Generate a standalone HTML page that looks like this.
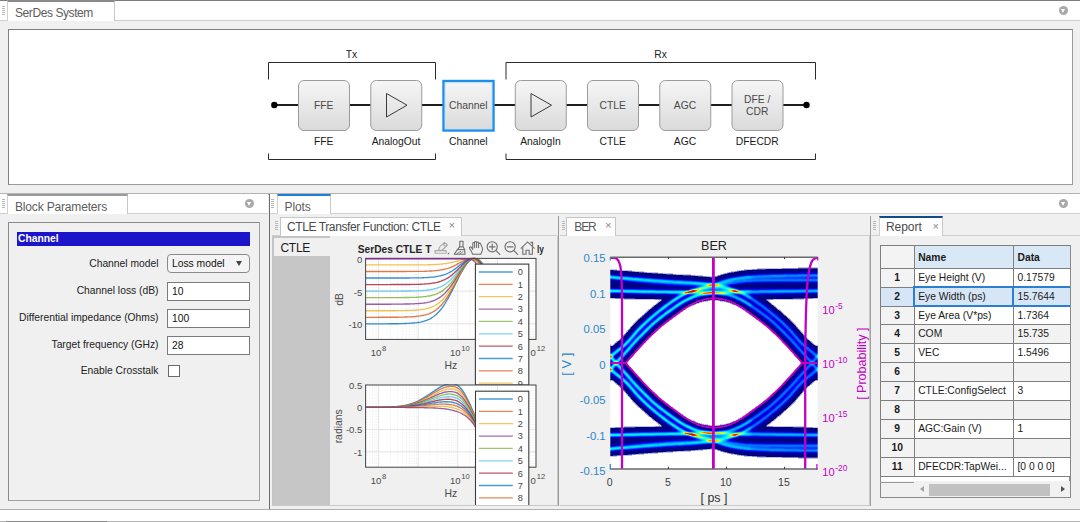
<!DOCTYPE html><html><head><meta charset="utf-8"><title>SerDes Designer</title><style>
*{box-sizing:border-box;margin:0;padding:0}
html,body{width:1080px;height:522px;overflow:hidden;background:#f0f0f0;font-family:"Liberation Sans",sans-serif;}
.abs{position:absolute}
.tabbar{position:absolute;background:#fff;border-bottom:1px solid #cfcfcf}
.tab{position:absolute;background:#fff;border:1px solid #c4c4c4;border-bottom:none;color:#555;font-size:12px;white-space:nowrap}
.ui{font-size:12px;color:#4a4a4a;white-space:nowrap;position:absolute}
.t{position:absolute;white-space:nowrap;font-size:10.3px;color:#222;line-height:12px}
.panel{position:absolute;border:1px solid #8c8c8c;}
.inp{position:absolute;background:#fff;border:1px solid #7a7a7a;font-size:10.3px;color:#111;line-height:16px;padding-left:4px}
.grip{position:absolute;width:3px;height:9px;background:repeating-linear-gradient(to bottom,#b8b8b8 0,#b8b8b8 1px,transparent 1px,transparent 2px)}
.circ{position:absolute;width:9px;height:9px;border-radius:50%;background:#a9a9a9}
.circ:after{content:"";position:absolute;left:2px;top:3px;border-left:2.5px solid transparent;border-right:2.5px solid transparent;border-top:4px solid #fff}
</style></head><body>
<div class="tabbar" style="left:0;top:0;width:1080px;height:21px;border-top:1px solid #7d7d7d"></div>
<div class="abs" style="left:7px;top:0;width:108px;height:21px;background:#fff;border-top:2px solid #8a8a8a;border-left:1px solid #d0d0d0;border-right:1px solid #c8c8c8"></div>
<div class="grip" style="left:2px;top:6px"></div>
<div class="ui" style="left:15px;top:6.3px;letter-spacing:-0.42px;line-height:14px;color:#5c5c5c">SerDes System</div>
<div class="circ" style="left:1059px;top:6px"></div>
<div class="panel" style="left:8px;top:29px;width:1065px;height:156px;background:#fff;border-color:#7f7f7f #9a9a9a #9a9a9a #7f7f7f"></div>
<svg class="abs" style="left:0;top:29px" width="1080" height="156" viewBox="0 29 1080 156" font-family="Liberation Sans, sans-serif"><defs><linearGradient id="bg" x1="0" y1="0" x2="0" y2="1"><stop offset="0" stop-color="#f6f6f6"/><stop offset="1" stop-color="#dadada"/></linearGradient></defs><path d="M268.5 79.5V62.5H435.5V79.5M268.5 153.5V159.5H435.5V153.5" fill="none" stroke="#2a2a2a" stroke-width="1"/><path d="M506 79.5V62.5H815.5V79.5M506 153.5V159.5H815.5V153.5" fill="none" stroke="#2a2a2a" stroke-width="1"/><text x="351.5" y="58" font-size="10.3" text-anchor="middle" fill="#222">Tx</text><text x="660.5" y="58" font-size="10.3" text-anchor="middle" fill="#222">Rx</text><path d="M274 105H807" stroke="#1e1e1e" stroke-width="2"/><circle cx="274.3" cy="105" r="3.2" fill="#000"/><circle cx="806.5" cy="105" r="3.2" fill="#000"/><rect x="298.50" y="80.5" width="51" height="50" rx="5.5" fill="url(#bg)" stroke="#9c9c9c" stroke-width="1"/><text x="323.75" y="109" font-size="10.3" text-anchor="middle" fill="#4a4a4a">FFE</text><text x="323.75" y="145.1" font-size="10.3" text-anchor="middle" fill="#1a1a1a">FFE</text><rect x="370.75" y="80.5" width="51" height="50" rx="5.5" fill="url(#bg)" stroke="#9c9c9c" stroke-width="1"/><path d="M386.50 93.5L407.00 105.2L386.50 117Z" fill="none" stroke="#3a3a3a" stroke-width="1"/><text x="396.00" y="145.1" font-size="10.3" text-anchor="middle" fill="#1a1a1a">AnalogOut</text><rect x="443.50" y="81" width="50" height="49.5" fill="url(#bg)" stroke="#1c8eec" stroke-width="2.4"/><rect x="445.20" y="82.7" width="46.6" height="46.1" fill="none" stroke="#bfe3fa" stroke-width="1" stroke-opacity="0.8"/><text x="468.25" y="109" font-size="10.3" text-anchor="middle" fill="#4a4a4a">Channel</text><text x="468.25" y="145.1" font-size="10.3" text-anchor="middle" fill="#1a1a1a">Channel</text><rect x="515.25" y="80.5" width="51" height="50" rx="5.5" fill="url(#bg)" stroke="#9c9c9c" stroke-width="1"/><path d="M531.00 93.5L551.50 105.2L531.00 117Z" fill="none" stroke="#3a3a3a" stroke-width="1"/><text x="540.50" y="145.1" font-size="10.3" text-anchor="middle" fill="#1a1a1a">AnalogIn</text><rect x="587.50" y="80.5" width="51" height="50" rx="5.5" fill="url(#bg)" stroke="#9c9c9c" stroke-width="1"/><text x="612.75" y="109" font-size="10.3" text-anchor="middle" fill="#4a4a4a">CTLE</text><text x="612.75" y="145.1" font-size="10.3" text-anchor="middle" fill="#1a1a1a">CTLE</text><rect x="659.75" y="80.5" width="51" height="50" rx="5.5" fill="url(#bg)" stroke="#9c9c9c" stroke-width="1"/><text x="685.00" y="109" font-size="10.3" text-anchor="middle" fill="#4a4a4a">AGC</text><text x="685.00" y="145.1" font-size="10.3" text-anchor="middle" fill="#1a1a1a">AGC</text><rect x="732.00" y="80.5" width="51" height="50" rx="5.5" fill="url(#bg)" stroke="#9c9c9c" stroke-width="1"/><text x="757.25" y="102.5" font-size="10.3" text-anchor="middle" fill="#4a4a4a">DFE /</text><text x="757.25" y="115" font-size="10.3" text-anchor="middle" fill="#4a4a4a">CDR</text><text x="757.25" y="145.1" font-size="10.3" text-anchor="middle" fill="#1a1a1a">DFECDR</text></svg>
<div class="abs" style="left:0;top:193.3px;width:1080px;height:1.4px;background:#b4b4b4"></div>
<div class="tabbar" style="left:0;top:194px;width:268px;height:20px"></div>
<div class="abs" style="left:7px;top:194px;width:121px;height:20px;background:#fff;border-top:2px solid #9a9a9a;border-left:1px solid #d0d0d0;border-right:1px solid #c8c8c8"></div>
<div class="grip" style="left:2px;top:199px"></div>
<div class="ui" style="left:15px;top:199.8px;letter-spacing:-0.17px;line-height:14px;color:#5c5c5c">Block Parameters</div>
<div class="circ" style="left:245px;top:199px"></div>
<div class="panel" style="left:8px;top:222px;width:252px;height:279px;border-color:#8a8a8a #a0a0a0 #a0a0a0 #8a8a8a"></div>
<div class="abs" style="left:17px;top:232px;width:233px;height:14px;background:#1c14c8"></div>
<div class="t" style="left:18px;top:233px;color:#fff;font-weight:bold;font-size:10.3px">Channel</div>
<div class="t" style="right:921.5px;top:257.9px">Channel model</div>
<div class="t" style="right:921.5px;top:285.4px">Channel loss (dB)</div>
<div class="t" style="right:921.5px;top:312.4px">Differential impedance (Ohms)</div>
<div class="t" style="right:921.5px;top:339.4px">Target frequency (GHz)</div>
<div class="t" style="right:921.5px;top:364.9px">Enable Crosstalk</div>
<div class="inp" style="left:167px;top:254px;width:83px;height:19px;border-radius:4px;background:#f4f4f4;border-color:#8a8a8a;line-height:17px">Loss model</div>
<div class="abs" style="left:236px;top:261px;border-left:3.5px solid transparent;border-right:3.5px solid transparent;border-top:5px solid #444"></div>
<div class="inp" style="left:167px;top:282px;width:83px;height:19px;line-height:17px">10</div>
<div class="inp" style="left:167px;top:309px;width:83px;height:19px;line-height:17px">100</div>
<div class="inp" style="left:167px;top:336px;width:83px;height:19px;line-height:17px">28</div>
<div class="abs" style="left:167.5px;top:364.7px;width:12px;height:12px;background:#fff;border:1px solid #6a6a6a"></div>
<div class="abs" style="left:269px;top:194px;width:1px;height:316px;background:#6e6e6e"></div>
<div class="abs" style="left:0;top:509px;width:1080px;height:1px;background:#b0b0b0"></div>
<div class="abs" style="left:0;top:510px;width:1080px;height:12px;background:#fff"></div>
<div class="abs" style="left:0;top:521px;width:1080px;height:1px;background:#b8b8b8"></div>
<div class="abs" style="left:6px;top:521px;width:101px;height:1px;background:#8a8a8a"></div>
<div class="tabbar" style="left:270px;top:194px;width:810px;height:20px"></div>
<div class="abs" style="left:277px;top:194px;width:54px;height:20px;background:#fff;border-top:2px solid #1b7fd6;border-left:1px solid #d0d0d0;border-right:1px solid #c8c8c8"></div>
<div class="grip" style="left:271px;top:199px"></div>
<div class="ui" style="left:284.5px;top:199.7px;letter-spacing:-0.1px;line-height:14px;color:#5c5c5c">Plots</div>
<div class="circ" style="left:1059px;top:199px"></div>
<div class="abs" style="left:272px;top:235px;width:285px;height:1px;background:#cfcfcf"></div><div class="grip" style="left:274.5px;top:221px"></div><div class="abs" style="left:279.5px;top:216.5px;width:182.5px;height:19.5px;background:#fff;border:1px solid #c6c6c6;border-bottom:none"></div><div class="ui" style="left:287px;top:220px;line-height:14px;letter-spacing:-0.4px">CTLE Transfer Function: CTLE</div><div class="ui" style="left:448.5px;top:218px;line-height:14px;font-size:11px;color:#888">×</div><div class="abs" style="left:272px;top:236px;width:2px;height:270px;background:#c4c4c4"></div><div class="abs" style="left:272px;top:235.5px;width:58px;height:2px;background:#c4c4c4"></div><div class="abs" style="left:272px;top:505px;width:286px;height:1px;background:#c9c9c9"></div><div class="abs" style="left:274px;top:256px;width:56px;height:249px;background:#c6c6c6"></div><div class="ui" style="left:280.5px;top:240.5px;line-height:14px;color:#1c1c1c;letter-spacing:-0.3px">CTLE</div><svg class="abs" style="left:330px;top:236px" width="228" height="269" viewBox="330 236 228 269" font-family="Liberation Sans, sans-serif"><defs><clipPath id="c1"><rect x="365.6" y="257.4" width="170.39999999999998" height="82.0"/></clipPath><clipPath id="c2"><rect x="365.6" y="384.0" width="170.39999999999998" height="83.19999999999999"/></clipPath></defs><rect x="365.6" y="258.4" width="170.39999999999998" height="81.0" fill="#fff"/><path d="M366.7 258.4V339.4" stroke="#e6e6e6" stroke-width="0.8" stroke-dasharray="1 1.6"/><path d="M369.8 258.4V339.4" stroke="#e6e6e6" stroke-width="0.8" stroke-dasharray="1 1.6"/><path d="M372.5 258.4V339.4" stroke="#e6e6e6" stroke-width="0.8" stroke-dasharray="1 1.6"/><path d="M374.8 258.4V339.4" stroke="#e6e6e6" stroke-width="0.8" stroke-dasharray="1 1.6"/><path d="M376.8 258.4V339.4" stroke="#e6e6e6" stroke-width="0.8" stroke-dasharray="1 1.6"/><path d="M390.5 258.4V339.4" stroke="#e6e6e6" stroke-width="0.8" stroke-dasharray="1 1.6"/><path d="M397.5 258.4V339.4" stroke="#e6e6e6" stroke-width="0.8" stroke-dasharray="1 1.6"/><path d="M402.4 258.4V339.4" stroke="#e6e6e6" stroke-width="0.8" stroke-dasharray="1 1.6"/><path d="M406.3 258.4V339.4" stroke="#e6e6e6" stroke-width="0.8" stroke-dasharray="1 1.6"/><path d="M409.4 258.4V339.4" stroke="#e6e6e6" stroke-width="0.8" stroke-dasharray="1 1.6"/><path d="M412.1 258.4V339.4" stroke="#e6e6e6" stroke-width="0.8" stroke-dasharray="1 1.6"/><path d="M414.4 258.4V339.4" stroke="#e6e6e6" stroke-width="0.8" stroke-dasharray="1 1.6"/><path d="M416.4 258.4V339.4" stroke="#e6e6e6" stroke-width="0.8" stroke-dasharray="1 1.6"/><path d="M430.1 258.4V339.4" stroke="#e6e6e6" stroke-width="0.8" stroke-dasharray="1 1.6"/><path d="M437.1 258.4V339.4" stroke="#e6e6e6" stroke-width="0.8" stroke-dasharray="1 1.6"/><path d="M442.0 258.4V339.4" stroke="#e6e6e6" stroke-width="0.8" stroke-dasharray="1 1.6"/><path d="M445.9 258.4V339.4" stroke="#e6e6e6" stroke-width="0.8" stroke-dasharray="1 1.6"/><path d="M449.0 258.4V339.4" stroke="#e6e6e6" stroke-width="0.8" stroke-dasharray="1 1.6"/><path d="M451.7 258.4V339.4" stroke="#e6e6e6" stroke-width="0.8" stroke-dasharray="1 1.6"/><path d="M454.0 258.4V339.4" stroke="#e6e6e6" stroke-width="0.8" stroke-dasharray="1 1.6"/><path d="M456.0 258.4V339.4" stroke="#e6e6e6" stroke-width="0.8" stroke-dasharray="1 1.6"/><path d="M469.7 258.4V339.4" stroke="#e6e6e6" stroke-width="0.8" stroke-dasharray="1 1.6"/><path d="M476.7 258.4V339.4" stroke="#e6e6e6" stroke-width="0.8" stroke-dasharray="1 1.6"/><path d="M481.6 258.4V339.4" stroke="#e6e6e6" stroke-width="0.8" stroke-dasharray="1 1.6"/><path d="M485.5 258.4V339.4" stroke="#e6e6e6" stroke-width="0.8" stroke-dasharray="1 1.6"/><path d="M488.6 258.4V339.4" stroke="#e6e6e6" stroke-width="0.8" stroke-dasharray="1 1.6"/><path d="M491.3 258.4V339.4" stroke="#e6e6e6" stroke-width="0.8" stroke-dasharray="1 1.6"/><path d="M493.6 258.4V339.4" stroke="#e6e6e6" stroke-width="0.8" stroke-dasharray="1 1.6"/><path d="M495.6 258.4V339.4" stroke="#e6e6e6" stroke-width="0.8" stroke-dasharray="1 1.6"/><path d="M509.3 258.4V339.4" stroke="#e6e6e6" stroke-width="0.8" stroke-dasharray="1 1.6"/><path d="M516.3 258.4V339.4" stroke="#e6e6e6" stroke-width="0.8" stroke-dasharray="1 1.6"/><path d="M521.2 258.4V339.4" stroke="#e6e6e6" stroke-width="0.8" stroke-dasharray="1 1.6"/><path d="M525.1 258.4V339.4" stroke="#e6e6e6" stroke-width="0.8" stroke-dasharray="1 1.6"/><path d="M528.2 258.4V339.4" stroke="#e6e6e6" stroke-width="0.8" stroke-dasharray="1 1.6"/><path d="M530.9 258.4V339.4" stroke="#e6e6e6" stroke-width="0.8" stroke-dasharray="1 1.6"/><path d="M533.2 258.4V339.4" stroke="#e6e6e6" stroke-width="0.8" stroke-dasharray="1 1.6"/><path d="M535.2 258.4V339.4" stroke="#e6e6e6" stroke-width="0.8" stroke-dasharray="1 1.6"/><path d="M378.6 258.4V339.4" stroke="#e4e4e4" stroke-width="1"/><path d="M418.2 258.4V339.4" stroke="#e4e4e4" stroke-width="1"/><path d="M457.8 258.4V339.4" stroke="#e4e4e4" stroke-width="1"/><path d="M497.4 258.4V339.4" stroke="#e4e4e4" stroke-width="1"/><path d="M365.6 291.1H536.0" stroke="#e2e2e2" stroke-width="1"/><path d="M365.6 323.8H536.0" stroke="#e2e2e2" stroke-width="1"/><g clip-path="url(#c1)" fill="none" stroke-width="1.35" stroke-opacity="0.78" stroke-linejoin="round"><path d="M365.6 323.8L366.8 323.8L368.0 323.8L369.3 323.8L370.5 323.8L371.7 323.8L372.9 323.8L374.1 323.8L375.3 323.8L376.6 323.8L377.8 323.8L379.0 323.8L380.2 323.8L381.4 323.8L382.6 323.8L383.9 323.8L385.1 323.8L386.3 323.8L387.5 323.8L388.7 323.8L389.9 323.7L391.2 323.7L392.4 323.7L393.6 323.7L394.8 323.7L396.0 323.7L397.2 323.7L398.5 323.7L399.7 323.6L400.9 323.6L402.1 323.6L403.3 323.6L404.5 323.5L405.8 323.5L407.0 323.4L408.2 323.4L409.4 323.3L410.6 323.2L411.9 323.1L413.1 323.0L414.3 322.9L415.5 322.8L416.7 322.7L417.9 322.5L419.2 322.3L420.4 322.1L421.6 321.8L422.8 321.5L424.0 321.2L425.2 320.8L426.5 320.4L427.7 319.9L428.9 319.4L430.1 318.8L431.3 318.1L432.5 317.3L433.8 316.5L435.0 315.5L436.2 314.5L437.4 313.3L438.6 312.1L439.8 310.7L441.1 309.2L442.3 307.6L443.5 305.9L444.7 304.0L445.9 302.0L447.1 300.0L448.4 297.8L449.6 295.6L450.8 293.3L452.0 290.9L453.2 288.5L454.5 286.0L455.7 283.5L456.9 281.1L458.1 278.6L459.3 276.3L460.5 273.9L461.8 271.7L463.0 269.6L464.2 267.6L465.4 265.7L466.6 264.0L467.8 262.5L469.1 261.2L470.3 260.2L471.5 259.3L472.7 258.8L473.9 258.5L475.1 258.4L476.4 258.6L477.6 259.1L478.8 259.9L480.0 260.9L481.2 262.2L482.4 263.7L483.7 265.5L484.9 267.5L486.1 269.7L487.3 272.0L488.5 274.6L489.7 277.3L491.0 280.2L492.2 283.1L493.4 286.3L494.6 289.5L495.8 292.8L497.1 296.2L498.3 299.7L499.5 303.2L500.7 306.8L501.9 310.5L503.1 314.2L504.4 317.9L505.6 321.7L506.8 325.5L508.0 329.4L509.2 333.2L510.4 337.1L511.7 341.0L512.9 344.9L514.1 348.8L515.3 352.8L516.5 356.7L517.7 360.7L519.0 364.7L520.2 368.6L521.4 372.6L522.6 376.6L523.8 380.6L525.0 384.6L526.3 388.6L527.5 392.6L528.7 396.6L529.9 400.6L531.1 404.6L532.3 408.6L533.6 412.6L534.8 416.6L536.0 420.6" stroke="#0072BD"/><path d="M365.6 317.3L366.8 317.3L368.0 317.3L369.3 317.3L370.5 317.3L371.7 317.3L372.9 317.3L374.1 317.3L375.3 317.3L376.6 317.3L377.8 317.3L379.0 317.2L380.2 317.2L381.4 317.2L382.6 317.2L383.9 317.2L385.1 317.2L386.3 317.2L387.5 317.2L388.7 317.2L389.9 317.2L391.2 317.2L392.4 317.2L393.6 317.2L394.8 317.2L396.0 317.2L397.2 317.2L398.5 317.2L399.7 317.1L400.9 317.1L402.1 317.1L403.3 317.1L404.5 317.0L405.8 317.0L407.0 317.0L408.2 316.9L409.4 316.9L410.6 316.8L411.9 316.7L413.1 316.7L414.3 316.6L415.5 316.5L416.7 316.4L417.9 316.2L419.2 316.1L420.4 315.9L421.6 315.7L422.8 315.5L424.0 315.2L425.2 314.9L426.5 314.6L427.7 314.2L428.9 313.8L430.1 313.3L431.3 312.7L432.5 312.1L433.8 311.4L435.0 310.6L436.2 309.8L437.4 308.8L438.6 307.8L439.8 306.6L441.1 305.3L442.3 303.9L443.5 302.4L444.7 300.8L445.9 299.1L447.1 297.3L448.4 295.4L449.6 293.3L450.8 291.2L452.0 289.1L453.2 286.8L454.5 284.6L455.7 282.3L456.9 280.0L458.1 277.7L459.3 275.4L460.5 273.2L461.8 271.1L463.0 269.0L464.2 267.1L465.4 265.3L466.6 263.7L467.8 262.3L469.1 261.1L470.3 260.0L471.5 259.3L472.7 258.7L473.9 258.4L475.1 258.4L476.4 258.7L477.6 259.2L478.8 260.0L480.0 261.0L481.2 262.3L482.4 263.8L483.7 265.6L484.9 267.6L486.1 269.8L487.3 272.2L488.5 274.7L489.7 277.5L491.0 280.3L492.2 283.3L493.4 286.4L494.6 289.7L495.8 293.0L497.1 296.4L498.3 299.9L499.5 303.4L500.7 307.0L501.9 310.7L503.1 314.4L504.4 318.1L505.6 321.9L506.8 325.7L508.0 329.5L509.2 333.4L510.4 337.3L511.7 341.2L512.9 345.1L514.1 349.0L515.3 353.0L516.5 356.9L517.7 360.9L519.0 364.9L520.2 368.8L521.4 372.8L522.6 376.8L523.8 380.8L525.0 384.8L526.3 388.8L527.5 392.8L528.7 396.8L529.9 400.8L531.1 404.8L532.3 408.8L533.6 412.8L534.8 416.8L536.0 420.8" stroke="#D95319"/><path d="M365.6 310.7L366.8 310.7L368.0 310.7L369.3 310.7L370.5 310.7L371.7 310.7L372.9 310.7L374.1 310.7L375.3 310.7L376.6 310.7L377.8 310.7L379.0 310.7L380.2 310.7L381.4 310.7L382.6 310.7L383.9 310.7L385.1 310.7L386.3 310.7L387.5 310.7L388.7 310.7L389.9 310.7L391.2 310.7L392.4 310.7L393.6 310.7L394.8 310.7L396.0 310.7L397.2 310.6L398.5 310.6L399.7 310.6L400.9 310.6L402.1 310.6L403.3 310.6L404.5 310.6L405.8 310.5L407.0 310.5L408.2 310.5L409.4 310.4L410.6 310.4L411.9 310.3L413.1 310.3L414.3 310.2L415.5 310.1L416.7 310.0L417.9 309.9L419.2 309.8L420.4 309.7L421.6 309.5L422.8 309.3L424.0 309.1L425.2 308.9L426.5 308.6L427.7 308.3L428.9 308.0L430.1 307.6L431.3 307.2L432.5 306.7L433.8 306.1L435.0 305.5L436.2 304.8L437.4 304.0L438.6 303.1L439.8 302.2L441.1 301.1L442.3 299.9L443.5 298.7L444.7 297.3L445.9 295.8L447.1 294.2L448.4 292.5L449.6 290.8L450.8 288.9L452.0 286.9L453.2 284.9L454.5 282.8L455.7 280.7L456.9 278.6L458.1 276.5L459.3 274.4L460.5 272.3L461.8 270.3L463.0 268.4L464.2 266.6L465.4 264.9L466.6 263.4L467.8 262.0L469.1 260.8L470.3 259.9L471.5 259.2L472.7 258.7L473.9 258.4L475.1 258.4L476.4 258.7L477.6 259.3L478.8 260.1L480.0 261.1L481.2 262.4L482.4 264.0L483.7 265.8L484.9 267.8L486.1 270.0L487.3 272.4L488.5 274.9L489.7 277.7L491.0 280.5L492.2 283.5L493.4 286.7L494.6 289.9L495.8 293.2L497.1 296.6L498.3 300.1L499.5 303.7L500.7 307.3L501.9 310.9L503.1 314.6L504.4 318.4L505.6 322.2L506.8 326.0L508.0 329.8L509.2 333.7L510.4 337.5L511.7 341.4L512.9 345.4L514.1 349.3L515.3 353.2L516.5 357.2L517.7 361.1L519.0 365.1L520.2 369.1L521.4 373.1L522.6 377.1L523.8 381.0L525.0 385.0L526.3 389.0L527.5 393.0L528.7 397.0L529.9 401.1L531.1 405.1L532.3 409.1L533.6 413.1L534.8 417.1L536.0 421.1" stroke="#EDB120"/><path d="M365.6 304.2L366.8 304.2L368.0 304.2L369.3 304.2L370.5 304.2L371.7 304.2L372.9 304.2L374.1 304.2L375.3 304.2L376.6 304.2L377.8 304.2L379.0 304.2L380.2 304.2L381.4 304.2L382.6 304.2L383.9 304.2L385.1 304.2L386.3 304.2L387.5 304.2L388.7 304.2L389.9 304.2L391.2 304.2L392.4 304.1L393.6 304.1L394.8 304.1L396.0 304.1L397.2 304.1L398.5 304.1L399.7 304.1L400.9 304.1L402.1 304.1L403.3 304.1L404.5 304.0L405.8 304.0L407.0 304.0L408.2 304.0L409.4 304.0L410.6 303.9L411.9 303.9L413.1 303.8L414.3 303.8L415.5 303.7L416.7 303.6L417.9 303.6L419.2 303.5L420.4 303.4L421.6 303.3L422.8 303.1L424.0 303.0L425.2 302.8L426.5 302.6L427.7 302.3L428.9 302.1L430.1 301.8L431.3 301.4L432.5 301.0L433.8 300.6L435.0 300.1L436.2 299.5L437.4 298.9L438.6 298.2L439.8 297.4L441.1 296.5L442.3 295.6L443.5 294.5L444.7 293.4L445.9 292.1L447.1 290.8L448.4 289.3L449.6 287.8L450.8 286.2L452.0 284.5L453.2 282.7L454.5 280.8L455.7 278.9L456.9 277.0L458.1 275.1L459.3 273.2L460.5 271.2L461.8 269.4L463.0 267.6L464.2 265.9L465.4 264.4L466.6 262.9L467.8 261.7L469.1 260.6L470.3 259.7L471.5 259.0L472.7 258.6L473.9 258.4L475.1 258.5L476.4 258.8L477.6 259.4L478.8 260.2L480.0 261.3L481.2 262.6L482.4 264.2L483.7 266.0L484.9 268.0L486.1 270.2L487.3 272.6L488.5 275.2L489.7 278.0L491.0 280.8L492.2 283.8L493.4 287.0L494.6 290.2L495.8 293.5L497.1 296.9L498.3 300.4L499.5 304.0L500.7 307.6L501.9 311.2L503.1 315.0L504.4 318.7L505.6 322.5L506.8 326.3L508.0 330.1L509.2 334.0L510.4 337.9L511.7 341.8L512.9 345.7L514.1 349.6L515.3 353.6L516.5 357.5L517.7 361.5L519.0 365.5L520.2 369.4L521.4 373.4L522.6 377.4L523.8 381.4L525.0 385.4L526.3 389.4L527.5 393.4L528.7 397.4L529.9 401.4L531.1 405.4L532.3 409.4L533.6 413.4L534.8 417.4L536.0 421.4" stroke="#7E2F8E"/><path d="M365.6 297.6L366.8 297.6L368.0 297.6L369.3 297.6L370.5 297.6L371.7 297.6L372.9 297.6L374.1 297.6L375.3 297.6L376.6 297.6L377.8 297.6L379.0 297.6L380.2 297.6L381.4 297.6L382.6 297.6L383.9 297.6L385.1 297.6L386.3 297.6L387.5 297.6L388.7 297.6L389.9 297.6L391.2 297.6L392.4 297.6L393.6 297.6L394.8 297.6L396.0 297.6L397.2 297.6L398.5 297.6L399.7 297.6L400.9 297.6L402.1 297.6L403.3 297.6L404.5 297.5L405.8 297.5L407.0 297.5L408.2 297.5L409.4 297.5L410.6 297.4L411.9 297.4L413.1 297.4L414.3 297.3L415.5 297.3L416.7 297.2L417.9 297.2L419.2 297.1L420.4 297.0L421.6 296.9L422.8 296.8L424.0 296.7L425.2 296.6L426.5 296.4L427.7 296.2L428.9 296.0L430.1 295.8L431.3 295.5L432.5 295.2L433.8 294.9L435.0 294.5L436.2 294.0L437.4 293.6L438.6 293.0L439.8 292.4L441.1 291.7L442.3 290.9L443.5 290.1L444.7 289.1L445.9 288.1L447.1 287.0L448.4 285.8L449.6 284.5L450.8 283.1L452.0 281.6L453.2 280.1L454.5 278.5L455.7 276.8L456.9 275.1L458.1 273.4L459.3 271.7L460.5 270.0L461.8 268.3L463.0 266.7L464.2 265.1L465.4 263.7L466.6 262.4L467.8 261.2L469.1 260.3L470.3 259.5L471.5 258.9L472.7 258.5L473.9 258.4L475.1 258.5L476.4 258.9L477.6 259.5L478.8 260.4L480.0 261.5L481.2 262.9L482.4 264.5L483.7 266.3L484.9 268.3L486.1 270.6L487.3 273.0L488.5 275.6L489.7 278.3L491.0 281.2L492.2 284.2L493.4 287.4L494.6 290.6L495.8 293.9L497.1 297.3L498.3 300.8L499.5 304.4L500.7 308.0L501.9 311.7L503.1 315.4L504.4 319.1L505.6 322.9L506.8 326.7L508.0 330.6L509.2 334.4L510.4 338.3L511.7 342.2L512.9 346.1L514.1 350.1L515.3 354.0L516.5 358.0L517.7 361.9L519.0 365.9L520.2 369.9L521.4 373.8L522.6 377.8L523.8 381.8L525.0 385.8L526.3 389.8L527.5 393.8L528.7 397.8L529.9 401.8L531.1 405.8L532.3 409.8L533.6 413.9L534.8 417.9L536.0 421.9" stroke="#77AC30"/><path d="M365.6 291.1L366.8 291.1L368.0 291.1L369.3 291.1L370.5 291.1L371.7 291.1L372.9 291.1L374.1 291.1L375.3 291.1L376.6 291.1L377.8 291.1L379.0 291.1L380.2 291.1L381.4 291.1L382.6 291.1L383.9 291.1L385.1 291.1L386.3 291.1L387.5 291.1L388.7 291.1L389.9 291.1L391.2 291.1L392.4 291.1L393.6 291.1L394.8 291.1L396.0 291.1L397.2 291.1L398.5 291.1L399.7 291.1L400.9 291.1L402.1 291.0L403.3 291.0L404.5 291.0L405.8 291.0L407.0 291.0L408.2 291.0L409.4 291.0L410.6 291.0L411.9 290.9L413.1 290.9L414.3 290.9L415.5 290.8L416.7 290.8L417.9 290.8L419.2 290.7L420.4 290.6L421.6 290.6L422.8 290.5L424.0 290.4L425.2 290.3L426.5 290.2L427.7 290.0L428.9 289.9L430.1 289.7L431.3 289.5L432.5 289.3L433.8 289.0L435.0 288.7L436.2 288.4L437.4 288.0L438.6 287.6L439.8 287.1L441.1 286.6L442.3 286.0L443.5 285.3L444.7 284.5L445.9 283.7L447.1 282.8L448.4 281.8L449.6 280.8L450.8 279.7L452.0 278.4L453.2 277.1L454.5 275.8L455.7 274.4L456.9 272.9L458.1 271.4L459.3 269.9L460.5 268.4L461.8 267.0L463.0 265.6L464.2 264.2L465.4 262.9L466.6 261.8L467.8 260.8L469.1 259.9L470.3 259.2L471.5 258.7L472.7 258.5L473.9 258.4L475.1 258.6L476.4 259.0L477.6 259.7L478.8 260.6L480.0 261.8L481.2 263.2L482.4 264.8L483.7 266.7L484.9 268.7L486.1 271.0L487.3 273.4L488.5 276.0L489.7 278.8L491.0 281.7L492.2 284.7L493.4 287.9L494.6 291.1L495.8 294.5L497.1 297.9L498.3 301.4L499.5 304.9L500.7 308.6L501.9 312.2L503.1 315.9L504.4 319.7L505.6 323.5L506.8 327.3L508.0 331.1L509.2 335.0L510.4 338.9L511.7 342.8L512.9 346.7L514.1 350.7L515.3 354.6L516.5 358.5L517.7 362.5L519.0 366.5L520.2 370.5L521.4 374.4L522.6 378.4L523.8 382.4L525.0 386.4L526.3 390.4L527.5 394.4L528.7 398.4L529.9 402.4L531.1 406.4L532.3 410.4L533.6 414.4L534.8 418.5L536.0 422.5" stroke="#4DBEEE"/><path d="M365.6 284.6L366.8 284.6L368.0 284.6L369.3 284.6L370.5 284.6L371.7 284.6L372.9 284.6L374.1 284.6L375.3 284.6L376.6 284.6L377.8 284.6L379.0 284.6L380.2 284.6L381.4 284.6L382.6 284.6L383.9 284.6L385.1 284.6L386.3 284.6L387.5 284.6L388.7 284.6L389.9 284.6L391.2 284.5L392.4 284.5L393.6 284.5L394.8 284.5L396.0 284.5L397.2 284.5L398.5 284.5L399.7 284.5L400.9 284.5L402.1 284.5L403.3 284.5L404.5 284.5L405.8 284.5L407.0 284.5L408.2 284.5L409.4 284.5L410.6 284.5L411.9 284.4L413.1 284.4L414.3 284.4L415.5 284.4L416.7 284.3L417.9 284.3L419.2 284.3L420.4 284.2L421.6 284.2L422.8 284.1L424.0 284.1L425.2 284.0L426.5 283.9L427.7 283.8L428.9 283.7L430.1 283.6L431.3 283.4L432.5 283.2L433.8 283.0L435.0 282.8L436.2 282.6L437.4 282.3L438.6 282.0L439.8 281.6L441.1 281.2L442.3 280.7L443.5 280.2L444.7 279.7L445.9 279.0L447.1 278.3L448.4 277.6L449.6 276.8L450.8 275.9L452.0 274.9L453.2 273.8L454.5 272.8L455.7 271.6L456.9 270.4L458.1 269.2L459.3 267.9L460.5 266.7L461.8 265.4L463.0 264.2L464.2 263.1L465.4 262.0L466.6 261.0L467.8 260.2L469.1 259.5L470.3 258.9L471.5 258.6L472.7 258.4L473.9 258.5L475.1 258.7L476.4 259.3L477.6 260.0L478.8 261.0L480.0 262.2L481.2 263.7L482.4 265.3L483.7 267.2L484.9 269.3L486.1 271.6L487.3 274.1L488.5 276.7L489.7 279.5L491.0 282.4L492.2 285.4L493.4 288.6L494.6 291.9L495.8 295.2L497.1 298.6L498.3 302.1L499.5 305.7L500.7 309.3L501.9 313.0L503.1 316.7L504.4 320.5L505.6 324.3L506.8 328.1L508.0 331.9L509.2 335.8L510.4 339.7L511.7 343.6L512.9 347.5L514.1 351.4L515.3 355.4L516.5 359.3L517.7 363.3L519.0 367.3L520.2 371.3L521.4 375.2L522.6 379.2L523.8 383.2L525.0 387.2L526.3 391.2L527.5 395.2L528.7 399.2L529.9 403.2L531.1 407.2L532.3 411.2L533.6 415.3L534.8 419.3L536.0 423.3" stroke="#A2142F"/><path d="M365.6 278.0L366.8 278.0L368.0 278.0L369.3 278.0L370.5 278.0L371.7 278.0L372.9 278.0L374.1 278.0L375.3 278.0L376.6 278.0L377.8 278.0L379.0 278.0L380.2 278.0L381.4 278.0L382.6 278.0L383.9 278.0L385.1 278.0L386.3 278.0L387.5 278.0L388.7 278.0L389.9 278.0L391.2 278.0L392.4 278.0L393.6 278.0L394.8 278.0L396.0 278.0L397.2 278.0L398.5 278.0L399.7 278.0L400.9 278.0L402.1 278.0L403.3 278.0L404.5 278.0L405.8 278.0L407.0 278.0L408.2 278.0L409.4 278.0L410.6 277.9L411.9 277.9L413.1 277.9L414.3 277.9L415.5 277.9L416.7 277.9L417.9 277.8L419.2 277.8L420.4 277.8L421.6 277.8L422.8 277.7L424.0 277.7L425.2 277.6L426.5 277.6L427.7 277.5L428.9 277.4L430.1 277.3L431.3 277.2L432.5 277.1L433.8 277.0L435.0 276.8L436.2 276.6L437.4 276.4L438.6 276.2L439.8 275.9L441.1 275.6L442.3 275.3L443.5 275.0L444.7 274.5L445.9 274.1L447.1 273.6L448.4 273.0L449.6 272.4L450.8 271.7L452.0 271.0L453.2 270.2L454.5 269.4L455.7 268.5L456.9 267.6L458.1 266.6L459.3 265.6L460.5 264.6L461.8 263.6L463.0 262.7L464.2 261.8L465.4 260.9L466.6 260.2L467.8 259.5L469.1 259.0L470.3 258.6L471.5 258.4L472.7 258.4L473.9 258.6L475.1 259.0L476.4 259.6L477.6 260.5L478.8 261.5L480.0 262.8L481.2 264.3L482.4 266.1L483.7 268.0L484.9 270.2L486.1 272.5L487.3 275.0L488.5 277.6L489.7 280.4L491.0 283.4L492.2 286.4L493.4 289.6L494.6 292.9L495.8 296.3L497.1 299.7L498.3 303.2L499.5 306.8L500.7 310.4L501.9 314.1L503.1 317.8L504.4 321.6L505.6 325.4L506.8 329.2L508.0 333.0L509.2 336.9L510.4 340.8L511.7 344.7L512.9 348.6L514.1 352.6L515.3 356.5L516.5 360.5L517.7 364.4L519.0 368.4L520.2 372.4L521.4 376.4L522.6 380.4L523.8 384.4L525.0 388.3L526.3 392.3L527.5 396.3L528.7 400.4L529.9 404.4L531.1 408.4L532.3 412.4L533.6 416.4L534.8 420.4L536.0 424.4" stroke="#0072BD"/><path d="M365.6 271.5L366.8 271.5L368.0 271.5L369.3 271.5L370.5 271.5L371.7 271.5L372.9 271.5L374.1 271.5L375.3 271.5L376.6 271.5L377.8 271.5L379.0 271.5L380.2 271.5L381.4 271.5L382.6 271.5L383.9 271.5L385.1 271.5L386.3 271.5L387.5 271.5L388.7 271.5L389.9 271.5L391.2 271.5L392.4 271.5L393.6 271.5L394.8 271.5L396.0 271.5L397.2 271.5L398.5 271.5L399.7 271.5L400.9 271.5L402.1 271.5L403.3 271.5L404.5 271.5L405.8 271.5L407.0 271.4L408.2 271.4L409.4 271.4L410.6 271.4L411.9 271.4L413.1 271.4L414.3 271.4L415.5 271.4L416.7 271.4L417.9 271.4L419.2 271.4L420.4 271.3L421.6 271.3L422.8 271.3L424.0 271.3L425.2 271.2L426.5 271.2L427.7 271.1L428.9 271.1L430.1 271.0L431.3 271.0L432.5 270.9L433.8 270.8L435.0 270.7L436.2 270.6L437.4 270.4L438.6 270.3L439.8 270.1L441.1 269.9L442.3 269.7L443.5 269.5L444.7 269.2L445.9 268.9L447.1 268.6L448.4 268.2L449.6 267.8L450.8 267.3L452.0 266.8L453.2 266.3L454.5 265.7L455.7 265.1L456.9 264.4L458.1 263.7L459.3 263.0L460.5 262.3L461.8 261.7L463.0 261.0L464.2 260.4L465.4 259.8L466.6 259.3L467.8 258.9L469.1 258.6L470.3 258.4L471.5 258.4L472.7 258.6L473.9 258.9L475.1 259.5L476.4 260.2L477.6 261.2L478.8 262.4L480.0 263.8L481.2 265.4L482.4 267.2L483.7 269.2L484.9 271.4L486.1 273.8L487.3 276.3L488.5 279.0L489.7 281.9L491.0 284.9L492.2 288.0L493.4 291.1L494.6 294.4L495.8 297.8L497.1 301.3L498.3 304.8L499.5 308.4L500.7 312.0L501.9 315.7L503.1 319.5L504.4 323.2L505.6 327.0L506.8 330.9L508.0 334.7L509.2 338.6L510.4 342.5L511.7 346.4L512.9 350.3L514.1 354.3L515.3 358.2L516.5 362.2L517.7 366.1L519.0 370.1L520.2 374.1L521.4 378.1L522.6 382.0L523.8 386.0L525.0 390.0L526.3 394.0L527.5 398.0L528.7 402.0L529.9 406.0L531.1 410.1L532.3 414.1L533.6 418.1L534.8 422.1L536.0 426.1" stroke="#D95319"/><path d="M365.6 264.9L366.8 264.9L368.0 264.9L369.3 264.9L370.5 264.9L371.7 264.9L372.9 264.9L374.1 264.9L375.3 264.9L376.6 264.9L377.8 264.9L379.0 264.9L380.2 264.9L381.4 264.9L382.6 264.9L383.9 264.9L385.1 264.9L386.3 264.9L387.5 264.9L388.7 264.9L389.9 264.9L391.2 264.9L392.4 264.9L393.6 264.9L394.8 264.9L396.0 264.9L397.2 264.9L398.5 264.9L399.7 264.9L400.9 264.9L402.1 264.9L403.3 264.9L404.5 264.9L405.8 264.9L407.0 264.9L408.2 264.9L409.4 264.9L410.6 264.9L411.9 264.9L413.1 264.9L414.3 264.9L415.5 264.9L416.7 264.9L417.9 264.9L419.2 264.9L420.4 264.9L421.6 264.8L422.8 264.8L424.0 264.8L425.2 264.8L426.5 264.8L427.7 264.8L428.9 264.7L430.1 264.7L431.3 264.7L432.5 264.6L433.8 264.6L435.0 264.5L436.2 264.5L437.4 264.4L438.6 264.3L439.8 264.2L441.1 264.1L442.3 264.0L443.5 263.9L444.7 263.7L445.9 263.5L447.1 263.3L448.4 263.1L449.6 262.9L450.8 262.7L452.0 262.4L453.2 262.1L454.5 261.8L455.7 261.4L456.9 261.1L458.1 260.7L459.3 260.3L460.5 259.9L461.8 259.6L463.0 259.2L464.2 258.9L465.4 258.7L466.6 258.5L467.8 258.4L469.1 258.4L470.3 258.5L471.5 258.8L472.7 259.2L473.9 259.8L475.1 260.6L476.4 261.5L477.6 262.7L478.8 264.0L480.0 265.5L481.2 267.3L482.4 269.2L483.7 271.3L484.9 273.6L486.1 276.1L487.3 278.7L488.5 281.5L489.7 284.4L491.0 287.4L492.2 290.5L493.4 293.8L494.6 297.1L495.8 300.5L497.1 304.0L498.3 307.5L499.5 311.1L500.7 314.8L501.9 318.5L503.1 322.2L504.4 326.0L505.6 329.8L506.8 333.7L508.0 337.5L509.2 341.4L510.4 345.3L511.7 349.2L512.9 353.1L514.1 357.1L515.3 361.0L516.5 365.0L517.7 369.0L519.0 372.9L520.2 376.9L521.4 380.9L522.6 384.9L523.8 388.9L525.0 392.9L526.3 396.9L527.5 400.9L528.7 404.9L529.9 408.9L531.1 412.9L532.3 416.9L533.6 420.9L534.8 424.9L536.0 429.0" stroke="#EDB120"/><path d="M365.6 258.4L366.8 258.4L368.0 258.4L369.3 258.4L370.5 258.4L371.7 258.4L372.9 258.4L374.1 258.4L375.3 258.4L376.6 258.4L377.8 258.4L379.0 258.4L380.2 258.4L381.4 258.4L382.6 258.4L383.9 258.4L385.1 258.4L386.3 258.4L387.5 258.4L388.7 258.4L389.9 258.4L391.2 258.4L392.4 258.4L393.6 258.4L394.8 258.4L396.0 258.4L397.2 258.4L398.5 258.4L399.7 258.4L400.9 258.4L402.1 258.4L403.3 258.4L404.5 258.4L405.8 258.4L407.0 258.4L408.2 258.4L409.4 258.4L410.6 258.4L411.9 258.4L413.1 258.4L414.3 258.4L415.5 258.4L416.7 258.4L417.9 258.4L419.2 258.4L420.4 258.4L421.6 258.4L422.8 258.4L424.0 258.4L425.2 258.4L426.5 258.4L427.7 258.4L428.9 258.4L430.1 258.4L431.3 258.4L432.5 258.4L433.8 258.4L435.0 258.4L436.2 258.4L437.4 258.4L438.6 258.4L439.8 258.4L441.1 258.4L442.3 258.4L443.5 258.4L444.7 258.4L445.9 258.4L447.1 258.4L448.4 258.4L449.6 258.4L450.8 258.4L452.0 258.4L453.2 258.4L454.5 258.4L455.7 258.4L456.9 258.4L458.1 258.4L459.3 258.4L460.5 258.4L461.8 258.4L463.0 258.5L464.2 258.5L465.4 258.5L466.6 258.6L467.8 258.7L469.1 258.9L470.3 259.1L471.5 259.5L472.7 260.1L473.9 260.9L475.1 262.1L476.4 263.9L477.6 266.5L478.8 270.0L480.0 274.6L481.2 280.5L482.4 287.7L483.7 296.0L484.9 305.3L486.1 315.4L487.3 326.1L488.5 337.2L489.7 348.7L491.0 360.3L492.2 372.1L493.4 384.0L494.6 395.9L495.8 407.9L497.1 419.9L498.3 432.0L499.5 444.0L500.7 456.0L501.9 468.1L503.1 480.2L504.4 492.2L505.6 504.3L506.8 516.3L508.0 528.4L509.2 540.4L510.4 552.5L511.7 564.6L512.9 576.6L514.1 588.7L515.3 600.8L516.5 612.8L517.7 624.9L519.0 636.9L520.2 649.0L521.4 661.1L522.6 673.1L523.8 685.2L525.0 697.2L526.3 709.3L527.5 721.4L528.7 733.4L529.9 745.5L531.1 757.5L532.3 769.6L533.6 781.7L534.8 793.7L536.0 805.8" stroke="#7E2F8E"/></g><rect x="365.6" y="258.4" width="170.39999999999998" height="81.0" fill="none" stroke="#444" stroke-width="1"/><path d="M365.6 258.7H470" stroke="#7E2F8E" stroke-width="1.4"/><text x="362.3" y="262.8" font-size="9.5" text-anchor="end" fill="#4a4a4a">0</text><text x="362.3" y="295.5" font-size="9.5" text-anchor="end" fill="#4a4a4a">-5</text><text x="362.3" y="328.2" font-size="9.5" text-anchor="end" fill="#4a4a4a">-10</text><text x="370.7" y="355.7" font-size="9.5" fill="#4a4a4a">10<tspan dx="0.8" dy="-4.5" font-size="7.6">8</tspan></text><text x="449.9" y="355.7" font-size="9.5" fill="#4a4a4a">10<tspan dx="0.8" dy="-4.5" font-size="7.6">10</tspan></text><text x="530.6" y="355.7" font-size="9.5" fill="#4a4a4a">0<tspan dx="0.8" dy="-4.5" font-size="7.6">12</tspan></text><text x="450.8" y="368.9" font-size="10.4" text-anchor="middle" fill="#4a4a4a">Hz</text><text transform="translate(343 299.5) rotate(-90)" font-size="10.4" text-anchor="middle" fill="#4a4a4a">dB</text><rect x="475.4" y="264.1" width="53.39999999999998" height="120.89999999999998" fill="#fff" stroke="#3c3c3c" stroke-width="1.1"/><path d="M478.8 272.0H512.7" stroke="#0072BD" stroke-width="1.3" stroke-opacity="0.7"/><text x="520.2" y="275.3" font-size="9.2" text-anchor="middle" fill="#444">0</text><path d="M478.8 284.4H512.7" stroke="#D95319" stroke-width="1.3" stroke-opacity="0.7"/><text x="520.2" y="287.7" font-size="9.2" text-anchor="middle" fill="#444">1</text><path d="M478.8 296.7H512.7" stroke="#EDB120" stroke-width="1.3" stroke-opacity="0.7"/><text x="520.2" y="300.0" font-size="9.2" text-anchor="middle" fill="#444">2</text><path d="M478.8 309.1H512.7" stroke="#7E2F8E" stroke-width="1.3" stroke-opacity="0.7"/><text x="520.2" y="312.4" font-size="9.2" text-anchor="middle" fill="#444">3</text><path d="M478.8 321.4H512.7" stroke="#77AC30" stroke-width="1.3" stroke-opacity="0.7"/><text x="520.2" y="324.7" font-size="9.2" text-anchor="middle" fill="#444">4</text><path d="M478.8 333.8H512.7" stroke="#4DBEEE" stroke-width="1.3" stroke-opacity="0.7"/><text x="520.2" y="337.1" font-size="9.2" text-anchor="middle" fill="#444">5</text><path d="M478.8 346.2H512.7" stroke="#A2142F" stroke-width="1.3" stroke-opacity="0.7"/><text x="520.2" y="349.5" font-size="9.2" text-anchor="middle" fill="#444">6</text><path d="M478.8 358.5H512.7" stroke="#0072BD" stroke-width="1.3" stroke-opacity="0.7"/><text x="520.2" y="361.8" font-size="9.2" text-anchor="middle" fill="#444">7</text><path d="M478.8 370.9H512.7" stroke="#D95319" stroke-width="1.3" stroke-opacity="0.7"/><text x="520.2" y="374.2" font-size="9.2" text-anchor="middle" fill="#444">8</text><path d="M478.8 383.2H512.7" stroke="#EDB120" stroke-width="1.3" stroke-opacity="0.7"/><text x="520.2" y="386.5" font-size="9.2" text-anchor="middle" fill="#444">9</text><rect x="365.6" y="385.0" width="170.39999999999998" height="82.19999999999999" fill="#fff"/><path d="M366.7 385.0V467.2" stroke="#e6e6e6" stroke-width="0.8" stroke-dasharray="1 1.6"/><path d="M369.8 385.0V467.2" stroke="#e6e6e6" stroke-width="0.8" stroke-dasharray="1 1.6"/><path d="M372.5 385.0V467.2" stroke="#e6e6e6" stroke-width="0.8" stroke-dasharray="1 1.6"/><path d="M374.8 385.0V467.2" stroke="#e6e6e6" stroke-width="0.8" stroke-dasharray="1 1.6"/><path d="M376.8 385.0V467.2" stroke="#e6e6e6" stroke-width="0.8" stroke-dasharray="1 1.6"/><path d="M390.5 385.0V467.2" stroke="#e6e6e6" stroke-width="0.8" stroke-dasharray="1 1.6"/><path d="M397.5 385.0V467.2" stroke="#e6e6e6" stroke-width="0.8" stroke-dasharray="1 1.6"/><path d="M402.4 385.0V467.2" stroke="#e6e6e6" stroke-width="0.8" stroke-dasharray="1 1.6"/><path d="M406.3 385.0V467.2" stroke="#e6e6e6" stroke-width="0.8" stroke-dasharray="1 1.6"/><path d="M409.4 385.0V467.2" stroke="#e6e6e6" stroke-width="0.8" stroke-dasharray="1 1.6"/><path d="M412.1 385.0V467.2" stroke="#e6e6e6" stroke-width="0.8" stroke-dasharray="1 1.6"/><path d="M414.4 385.0V467.2" stroke="#e6e6e6" stroke-width="0.8" stroke-dasharray="1 1.6"/><path d="M416.4 385.0V467.2" stroke="#e6e6e6" stroke-width="0.8" stroke-dasharray="1 1.6"/><path d="M430.1 385.0V467.2" stroke="#e6e6e6" stroke-width="0.8" stroke-dasharray="1 1.6"/><path d="M437.1 385.0V467.2" stroke="#e6e6e6" stroke-width="0.8" stroke-dasharray="1 1.6"/><path d="M442.0 385.0V467.2" stroke="#e6e6e6" stroke-width="0.8" stroke-dasharray="1 1.6"/><path d="M445.9 385.0V467.2" stroke="#e6e6e6" stroke-width="0.8" stroke-dasharray="1 1.6"/><path d="M449.0 385.0V467.2" stroke="#e6e6e6" stroke-width="0.8" stroke-dasharray="1 1.6"/><path d="M451.7 385.0V467.2" stroke="#e6e6e6" stroke-width="0.8" stroke-dasharray="1 1.6"/><path d="M454.0 385.0V467.2" stroke="#e6e6e6" stroke-width="0.8" stroke-dasharray="1 1.6"/><path d="M456.0 385.0V467.2" stroke="#e6e6e6" stroke-width="0.8" stroke-dasharray="1 1.6"/><path d="M469.7 385.0V467.2" stroke="#e6e6e6" stroke-width="0.8" stroke-dasharray="1 1.6"/><path d="M476.7 385.0V467.2" stroke="#e6e6e6" stroke-width="0.8" stroke-dasharray="1 1.6"/><path d="M481.6 385.0V467.2" stroke="#e6e6e6" stroke-width="0.8" stroke-dasharray="1 1.6"/><path d="M485.5 385.0V467.2" stroke="#e6e6e6" stroke-width="0.8" stroke-dasharray="1 1.6"/><path d="M488.6 385.0V467.2" stroke="#e6e6e6" stroke-width="0.8" stroke-dasharray="1 1.6"/><path d="M491.3 385.0V467.2" stroke="#e6e6e6" stroke-width="0.8" stroke-dasharray="1 1.6"/><path d="M493.6 385.0V467.2" stroke="#e6e6e6" stroke-width="0.8" stroke-dasharray="1 1.6"/><path d="M495.6 385.0V467.2" stroke="#e6e6e6" stroke-width="0.8" stroke-dasharray="1 1.6"/><path d="M509.3 385.0V467.2" stroke="#e6e6e6" stroke-width="0.8" stroke-dasharray="1 1.6"/><path d="M516.3 385.0V467.2" stroke="#e6e6e6" stroke-width="0.8" stroke-dasharray="1 1.6"/><path d="M521.2 385.0V467.2" stroke="#e6e6e6" stroke-width="0.8" stroke-dasharray="1 1.6"/><path d="M525.1 385.0V467.2" stroke="#e6e6e6" stroke-width="0.8" stroke-dasharray="1 1.6"/><path d="M528.2 385.0V467.2" stroke="#e6e6e6" stroke-width="0.8" stroke-dasharray="1 1.6"/><path d="M530.9 385.0V467.2" stroke="#e6e6e6" stroke-width="0.8" stroke-dasharray="1 1.6"/><path d="M533.2 385.0V467.2" stroke="#e6e6e6" stroke-width="0.8" stroke-dasharray="1 1.6"/><path d="M535.2 385.0V467.2" stroke="#e6e6e6" stroke-width="0.8" stroke-dasharray="1 1.6"/><path d="M378.6 385.0V467.2" stroke="#e4e4e4" stroke-width="1"/><path d="M418.2 385.0V467.2" stroke="#e4e4e4" stroke-width="1"/><path d="M457.8 385.0V467.2" stroke="#e4e4e4" stroke-width="1"/><path d="M497.4 385.0V467.2" stroke="#e4e4e4" stroke-width="1"/><path d="M365.6 429.6H536.0" stroke="#e2e2e2" stroke-width="1"/><path d="M365.6 451.9H536.0" stroke="#e2e2e2" stroke-width="1"/><g clip-path="url(#c2)" fill="none" stroke-width="1.35" stroke-opacity="0.78" stroke-linejoin="round"><path d="M365.6 407.4L366.8 407.4L368.0 407.4L369.3 407.4L370.5 407.4L371.7 407.4L372.9 407.4L374.1 407.4L375.3 407.4L376.6 407.4L377.8 407.3L379.0 407.3L380.2 407.3L381.4 407.3L382.6 407.3L383.9 407.2L385.1 407.2L386.3 407.2L387.5 407.1L388.7 407.1L389.9 407.0L391.2 407.0L392.4 406.9L393.6 406.8L394.8 406.7L396.0 406.6L397.2 406.5L398.5 406.4L399.7 406.2L400.9 406.1L402.1 405.9L403.3 405.7L404.5 405.4L405.8 405.2L407.0 404.9L408.2 404.6L409.4 404.2L410.6 403.9L411.9 403.5L413.1 403.0L414.3 402.6L415.5 402.1L416.7 401.5L417.9 401.0L419.2 400.4L420.4 399.7L421.6 399.1L422.8 398.4L424.0 397.7L425.2 396.9L426.5 396.1L427.7 395.4L428.9 394.5L430.1 393.7L431.3 392.9L432.5 392.1L433.8 391.3L435.0 390.4L436.2 389.6L437.4 388.9L438.6 388.1L439.8 387.4L441.1 386.7L442.3 386.1L443.5 385.6L444.7 385.1L445.9 384.6L447.1 384.3L448.4 384.0L449.6 383.8L450.8 383.7L452.0 383.7L453.2 383.9L454.5 384.1L455.7 384.4L456.9 385.0L458.1 385.7L459.3 386.8L460.5 388.0L461.8 389.5L463.0 391.2L464.2 393.1L465.4 395.1L466.6 397.4L467.8 399.8L469.1 402.3L470.3 404.9L471.5 407.7L472.7 410.6L473.9 413.6L475.1 416.7L476.4 420.0L477.6 423.3L478.8 426.9L480.0 430.6L481.2 434.6L482.4 438.8L483.7 443.3L484.9 448.1L486.1 453.3L487.3 459.0L488.5 465.1L489.7 471.9L491.0 479.2L492.2 487.3L493.4 496.2L494.6 506.1L495.8 516.9L497.1 528.9L498.3 542.1L499.5 556.7L500.7 572.9L501.9 590.9L503.1 610.8L504.4 632.8L505.6 657.1L506.8 684.1L508.0 714.1L509.2 747.2L510.4 783.9L511.7 824.6L512.9 869.7L514.1 919.7L515.3 975.1L516.5 1036.4L517.7 1104.4L519.0 1179.7L520.2 1263.2L521.4 1355.7L522.6 1458.2L523.8 1571.7L525.0 1697.5L526.3 1837.0L527.5 1991.5L528.7 2162.7L529.9 2352.3L531.1 2562.5L532.3 2795.4L533.6 3053.5L534.8 3339.5L536.0 3656.4" stroke="#0072BD"/><path d="M365.6 407.4L366.8 407.4L368.0 407.4L369.3 407.4L370.5 407.4L371.7 407.4L372.9 407.4L374.1 407.4L375.3 407.4L376.6 407.4L377.8 407.3L379.0 407.3L380.2 407.3L381.4 407.3L382.6 407.3L383.9 407.3L385.1 407.2L386.3 407.2L387.5 407.2L388.7 407.1L389.9 407.1L391.2 407.0L392.4 407.0L393.6 406.9L394.8 406.8L396.0 406.7L397.2 406.6L398.5 406.5L399.7 406.3L400.9 406.2L402.1 406.0L403.3 405.8L404.5 405.6L405.8 405.4L407.0 405.1L408.2 404.9L409.4 404.6L410.6 404.2L411.9 403.9L413.1 403.5L414.3 403.1L415.5 402.6L416.7 402.1L417.9 401.6L419.2 401.1L420.4 400.5L421.6 399.9L422.8 399.3L424.0 398.7L425.2 398.0L426.5 397.3L427.7 396.6L428.9 395.9L430.1 395.1L431.3 394.4L432.5 393.7L433.8 392.9L435.0 392.2L436.2 391.5L437.4 390.8L438.6 390.1L439.8 389.5L441.1 388.9L442.3 388.4L443.5 387.9L444.7 387.4L445.9 387.1L447.1 386.8L448.4 386.5L449.6 386.4L450.8 386.3L452.0 386.4L453.2 386.5L454.5 386.7L455.7 387.1L456.9 387.6L458.1 388.4L459.3 389.3L460.5 390.5L461.8 391.9L463.0 393.5L464.2 395.3L465.4 397.2L466.6 399.3L467.8 401.6L469.1 403.9L470.3 406.4L471.5 409.1L472.7 411.8L473.9 414.7L475.1 417.7L476.4 420.8L477.6 424.1L478.8 427.6L480.0 431.2L481.2 435.1L482.4 439.2L483.7 443.6L484.9 448.4L486.1 453.6L487.3 459.2L488.5 465.3L489.7 472.0L491.0 479.3L492.2 487.4L493.4 496.3L494.6 506.1L495.8 516.9L497.1 528.9L498.3 542.1L499.5 556.8L500.7 573.0L501.9 590.9L503.1 610.8L504.4 632.8L505.6 657.1L506.8 684.2L508.0 714.1L509.2 747.2L510.4 783.9L511.7 824.6L512.9 869.7L514.1 919.7L515.3 975.1L516.5 1036.4L517.7 1104.4L519.0 1179.7L520.2 1263.2L521.4 1355.7L522.6 1458.2L523.8 1571.7L525.0 1697.5L526.3 1837.0L527.5 1991.5L528.7 2162.7L529.9 2352.3L531.1 2562.5L532.3 2795.4L533.6 3053.5L534.8 3339.5L536.0 3656.4" stroke="#D95319"/><path d="M365.6 407.4L366.8 407.4L368.0 407.4L369.3 407.4L370.5 407.4L371.7 407.4L372.9 407.4L374.1 407.4L375.3 407.4L376.6 407.4L377.8 407.4L379.0 407.3L380.2 407.3L381.4 407.3L382.6 407.3L383.9 407.3L385.1 407.3L386.3 407.2L387.5 407.2L388.7 407.2L389.9 407.1L391.2 407.1L392.4 407.0L393.6 406.9L394.8 406.9L396.0 406.8L397.2 406.7L398.5 406.6L399.7 406.5L400.9 406.3L402.1 406.2L403.3 406.0L404.5 405.8L405.8 405.6L407.0 405.4L408.2 405.2L409.4 404.9L410.6 404.6L411.9 404.3L413.1 403.9L414.3 403.6L415.5 403.2L416.7 402.7L417.9 402.3L419.2 401.8L420.4 401.3L421.6 400.8L422.8 400.2L424.0 399.7L425.2 399.1L426.5 398.5L427.7 397.8L428.9 397.2L430.1 396.6L431.3 395.9L432.5 395.3L433.8 394.6L435.0 394.0L436.2 393.3L437.4 392.7L438.6 392.2L439.8 391.6L441.1 391.1L442.3 390.6L443.5 390.2L444.7 389.8L445.9 389.5L447.1 389.3L448.4 389.1L449.6 389.0L450.8 389.0L452.0 389.0L453.2 389.2L454.5 389.4L455.7 389.8L456.9 390.3L458.1 391.0L459.3 391.9L460.5 393.0L461.8 394.3L463.0 395.8L464.2 397.5L465.4 399.3L466.6 401.3L467.8 403.4L469.1 405.6L470.3 408.0L471.5 410.5L472.7 413.1L473.9 415.8L475.1 418.7L476.4 421.7L477.6 424.9L478.8 428.2L480.0 431.8L481.2 435.6L482.4 439.6L483.7 444.0L484.9 448.7L486.1 453.8L487.3 459.4L488.5 465.5L489.7 472.1L491.0 479.5L492.2 487.5L493.4 496.4L494.6 506.2L495.8 517.0L497.1 528.9L498.3 542.1L499.5 556.8L500.7 573.0L501.9 590.9L503.1 610.8L504.4 632.8L505.6 657.2L506.8 684.2L508.0 714.1L509.2 747.2L510.4 784.0L511.7 824.6L512.9 869.7L514.1 919.7L515.3 975.1L516.5 1036.4L517.7 1104.4L519.0 1179.7L520.2 1263.2L521.4 1355.7L522.6 1458.2L523.8 1571.7L525.0 1697.5L526.3 1837.0L527.5 1991.5L528.7 2162.7L529.9 2352.3L531.1 2562.5L532.3 2795.4L533.6 3053.5L534.8 3339.5L536.0 3656.4" stroke="#EDB120"/><path d="M365.6 407.4L366.8 407.4L368.0 407.4L369.3 407.4L370.5 407.4L371.7 407.4L372.9 407.4L374.1 407.4L375.3 407.4L376.6 407.4L377.8 407.4L379.0 407.4L380.2 407.3L381.4 407.3L382.6 407.3L383.9 407.3L385.1 407.3L386.3 407.3L387.5 407.2L388.7 407.2L389.9 407.2L391.2 407.1L392.4 407.1L393.6 407.0L394.8 406.9L396.0 406.9L397.2 406.8L398.5 406.7L399.7 406.6L400.9 406.5L402.1 406.3L403.3 406.2L404.5 406.0L405.8 405.9L407.0 405.7L408.2 405.4L409.4 405.2L410.6 405.0L411.9 404.7L413.1 404.4L414.3 404.1L415.5 403.7L416.7 403.3L417.9 402.9L419.2 402.5L420.4 402.1L421.6 401.6L422.8 401.2L424.0 400.7L425.2 400.1L426.5 399.6L427.7 399.1L428.9 398.5L430.1 398.0L431.3 397.4L432.5 396.8L433.8 396.3L435.0 395.7L436.2 395.2L437.4 394.7L438.6 394.2L439.8 393.7L441.1 393.3L442.3 392.9L443.5 392.5L444.7 392.2L445.9 392.0L447.1 391.8L448.4 391.6L449.6 391.6L450.8 391.6L452.0 391.7L453.2 391.8L454.5 392.1L455.7 392.4L456.9 392.9L458.1 393.6L459.3 394.5L460.5 395.5L461.8 396.7L463.0 398.1L464.2 399.7L465.4 401.4L466.6 403.2L467.8 405.2L469.1 407.3L470.3 409.5L471.5 411.8L472.7 414.3L473.9 416.9L475.1 419.7L476.4 422.6L477.6 425.6L478.8 428.9L480.0 432.4L481.2 436.1L482.4 440.0L483.7 444.3L484.9 449.0L486.1 454.1L487.3 459.6L488.5 465.6L489.7 472.3L491.0 479.6L492.2 487.6L493.4 496.4L494.6 506.2L495.8 517.0L497.1 529.0L498.3 542.2L499.5 556.8L500.7 573.0L501.9 590.9L503.1 610.8L504.4 632.8L505.6 657.2L506.8 684.2L508.0 714.1L509.2 747.2L510.4 784.0L511.7 824.6L512.9 869.7L514.1 919.7L515.3 975.1L516.5 1036.4L517.7 1104.4L519.0 1179.7L520.2 1263.2L521.4 1355.7L522.6 1458.2L523.8 1571.7L525.0 1697.5L526.3 1837.0L527.5 1991.5L528.7 2162.7L529.9 2352.3L531.1 2562.5L532.3 2795.4L533.6 3053.5L534.8 3339.5L536.0 3656.4" stroke="#7E2F8E"/><path d="M365.6 407.4L366.8 407.4L368.0 407.4L369.3 407.4L370.5 407.4L371.7 407.4L372.9 407.4L374.1 407.4L375.3 407.4L376.6 407.4L377.8 407.4L379.0 407.4L380.2 407.3L381.4 407.3L382.6 407.3L383.9 407.3L385.1 407.3L386.3 407.3L387.5 407.3L388.7 407.2L389.9 407.2L391.2 407.2L392.4 407.1L393.6 407.1L394.8 407.0L396.0 406.9L397.2 406.9L398.5 406.8L399.7 406.7L400.9 406.6L402.1 406.5L403.3 406.4L404.5 406.2L405.8 406.1L407.0 405.9L408.2 405.7L409.4 405.5L410.6 405.3L411.9 405.1L413.1 404.8L414.3 404.5L415.5 404.3L416.7 403.9L417.9 403.6L419.2 403.3L420.4 402.9L421.6 402.5L422.8 402.1L424.0 401.7L425.2 401.2L426.5 400.8L427.7 400.3L428.9 399.8L430.1 399.4L431.3 398.9L432.5 398.4L433.8 398.0L435.0 397.5L436.2 397.0L437.4 396.6L438.6 396.2L439.8 395.8L441.1 395.4L442.3 395.1L443.5 394.8L444.7 394.6L445.9 394.4L447.1 394.2L448.4 394.2L449.6 394.1L450.8 394.2L452.0 394.3L453.2 394.5L454.5 394.8L455.7 395.1L456.9 395.6L458.1 396.2L459.3 397.0L460.5 398.0L461.8 399.1L463.0 400.4L464.2 401.9L465.4 403.4L466.6 405.1L467.8 407.0L469.1 408.9L470.3 411.0L471.5 413.2L472.7 415.6L473.9 418.0L475.1 420.7L476.4 423.4L477.6 426.4L478.8 429.5L480.0 432.9L481.2 436.5L482.4 440.5L483.7 444.7L484.9 449.3L486.1 454.3L487.3 459.8L488.5 465.8L489.7 472.4L491.0 479.7L492.2 487.7L493.4 496.5L494.6 506.3L495.8 517.1L497.1 529.0L498.3 542.2L499.5 556.8L500.7 573.0L501.9 590.9L503.1 610.8L504.4 632.8L505.6 657.2L506.8 684.2L508.0 714.1L509.2 747.2L510.4 784.0L511.7 824.7L512.9 869.7L514.1 919.7L515.3 975.1L516.5 1036.4L517.7 1104.4L519.0 1179.7L520.2 1263.2L521.4 1355.7L522.6 1458.2L523.8 1571.7L525.0 1697.5L526.3 1837.0L527.5 1991.5L528.7 2162.7L529.9 2352.3L531.1 2562.5L532.3 2795.4L533.6 3053.5L534.8 3339.5L536.0 3656.4" stroke="#77AC30"/><path d="M365.6 407.4L366.8 407.4L368.0 407.4L369.3 407.4L370.5 407.4L371.7 407.4L372.9 407.4L374.1 407.4L375.3 407.4L376.6 407.4L377.8 407.4L379.0 407.4L380.2 407.4L381.4 407.4L382.6 407.3L383.9 407.3L385.1 407.3L386.3 407.3L387.5 407.3L388.7 407.3L389.9 407.2L391.2 407.2L392.4 407.2L393.6 407.1L394.8 407.1L396.0 407.0L397.2 407.0L398.5 406.9L399.7 406.8L400.9 406.7L402.1 406.7L403.3 406.6L404.5 406.4L405.8 406.3L407.0 406.2L408.2 406.0L409.4 405.9L410.6 405.7L411.9 405.5L413.1 405.3L414.3 405.0L415.5 404.8L416.7 404.5L417.9 404.3L419.2 404.0L420.4 403.7L421.6 403.3L422.8 403.0L424.0 402.7L425.2 402.3L426.5 401.9L427.7 401.6L428.9 401.2L430.1 400.8L431.3 400.4L432.5 400.0L433.8 399.6L435.0 399.2L436.2 398.9L437.4 398.5L438.6 398.2L439.8 397.9L441.1 397.6L442.3 397.4L443.5 397.1L444.7 397.0L445.9 396.8L447.1 396.7L448.4 396.7L449.6 396.7L450.8 396.8L452.0 396.9L453.2 397.1L454.5 397.4L455.7 397.8L456.9 398.2L458.1 398.9L459.3 399.6L460.5 400.5L461.8 401.6L463.0 402.7L464.2 404.1L465.4 405.5L466.6 407.1L467.8 408.8L469.1 410.6L470.3 412.5L471.5 414.6L472.7 416.8L473.9 419.2L475.1 421.7L476.4 424.3L477.6 427.2L478.8 430.2L480.0 433.5L481.2 437.0L482.4 440.9L483.7 445.0L484.9 449.6L486.1 454.5L487.3 460.0L488.5 466.0L489.7 472.5L491.0 479.8L492.2 487.8L493.4 496.6L494.6 506.3L495.8 517.1L497.1 529.0L498.3 542.2L499.5 556.8L500.7 573.0L501.9 590.9L503.1 610.8L504.4 632.8L505.6 657.2L506.8 684.2L508.0 714.1L509.2 747.2L510.4 784.0L511.7 824.7L512.9 869.7L514.1 919.7L515.3 975.1L516.5 1036.4L517.7 1104.4L519.0 1179.7L520.2 1263.2L521.4 1355.7L522.6 1458.2L523.8 1571.7L525.0 1697.5L526.3 1837.0L527.5 1991.5L528.7 2162.7L529.9 2352.3L531.1 2562.5L532.3 2795.4L533.6 3053.5L534.8 3339.5L536.0 3656.4" stroke="#4DBEEE"/><path d="M365.6 407.4L366.8 407.4L368.0 407.4L369.3 407.4L370.5 407.4L371.7 407.4L372.9 407.4L374.1 407.4L375.3 407.4L376.6 407.4L377.8 407.4L379.0 407.4L380.2 407.4L381.4 407.4L382.6 407.4L383.9 407.3L385.1 407.3L386.3 407.3L387.5 407.3L388.7 407.3L389.9 407.3L391.2 407.2L392.4 407.2L393.6 407.2L394.8 407.1L396.0 407.1L397.2 407.1L398.5 407.0L399.7 407.0L400.9 406.9L402.1 406.8L403.3 406.7L404.5 406.6L405.8 406.5L407.0 406.4L408.2 406.3L409.4 406.2L410.6 406.0L411.9 405.9L413.1 405.7L414.3 405.5L415.5 405.3L416.7 405.1L417.9 404.9L419.2 404.7L420.4 404.4L421.6 404.2L422.8 403.9L424.0 403.7L425.2 403.4L426.5 403.1L427.7 402.8L428.9 402.5L430.1 402.2L431.3 401.9L432.5 401.6L433.8 401.3L435.0 401.0L436.2 400.7L437.4 400.5L438.6 400.2L439.8 400.0L441.1 399.8L442.3 399.6L443.5 399.5L444.7 399.3L445.9 399.3L447.1 399.2L448.4 399.2L449.6 399.3L450.8 399.4L452.0 399.6L453.2 399.8L454.5 400.1L455.7 400.4L456.9 400.9L458.1 401.5L459.3 402.2L460.5 403.0L461.8 404.0L463.0 405.0L464.2 406.2L465.4 407.6L466.6 409.0L467.8 410.6L469.1 412.2L470.3 414.1L471.5 416.0L472.7 418.1L473.9 420.3L475.1 422.6L476.4 425.2L477.6 427.9L478.8 430.9L480.0 434.1L481.2 437.5L482.4 441.3L483.7 445.4L484.9 449.9L486.1 454.8L487.3 460.2L488.5 466.1L489.7 472.7L491.0 479.9L492.2 487.8L493.4 496.6L494.6 506.4L495.8 517.1L497.1 529.1L498.3 542.2L499.5 556.9L500.7 573.0L501.9 591.0L503.1 610.8L504.4 632.8L505.6 657.2L506.8 684.2L508.0 714.1L509.2 747.2L510.4 784.0L511.7 824.7L512.9 869.7L514.1 919.7L515.3 975.1L516.5 1036.4L517.7 1104.4L519.0 1179.7L520.2 1263.2L521.4 1355.7L522.6 1458.2L523.8 1571.7L525.0 1697.5L526.3 1837.0L527.5 1991.5L528.7 2162.7L529.9 2352.3L531.1 2562.5L532.3 2795.4L533.6 3053.5L534.8 3339.5L536.0 3656.4" stroke="#A2142F"/><path d="M365.6 407.4L366.8 407.4L368.0 407.4L369.3 407.4L370.5 407.4L371.7 407.4L372.9 407.4L374.1 407.4L375.3 407.4L376.6 407.4L377.8 407.4L379.0 407.4L380.2 407.4L381.4 407.4L382.6 407.4L383.9 407.4L385.1 407.4L386.3 407.3L387.5 407.3L388.7 407.3L389.9 407.3L391.2 407.3L392.4 407.3L393.6 407.2L394.8 407.2L396.0 407.2L397.2 407.2L398.5 407.1L399.7 407.1L400.9 407.0L402.1 407.0L403.3 406.9L404.5 406.8L405.8 406.8L407.0 406.7L408.2 406.6L409.4 406.5L410.6 406.4L411.9 406.3L413.1 406.2L414.3 406.0L415.5 405.9L416.7 405.7L417.9 405.6L419.2 405.4L420.4 405.2L421.6 405.1L422.8 404.9L424.0 404.7L425.2 404.5L426.5 404.2L427.7 404.0L428.9 403.8L430.1 403.6L431.3 403.4L432.5 403.2L433.8 403.0L435.0 402.8L436.2 402.6L437.4 402.4L438.6 402.2L439.8 402.1L441.1 402.0L442.3 401.9L443.5 401.8L444.7 401.7L445.9 401.7L447.1 401.7L448.4 401.8L449.6 401.9L450.8 402.0L452.0 402.2L453.2 402.5L454.5 402.8L455.7 403.1L456.9 403.6L458.1 404.1L459.3 404.8L460.5 405.5L461.8 406.4L463.0 407.4L464.2 408.4L465.4 409.6L466.6 410.9L467.8 412.4L469.1 413.9L470.3 415.6L471.5 417.4L472.7 419.3L473.9 421.4L475.1 423.6L476.4 426.1L477.6 428.7L478.8 431.5L480.0 434.6L481.2 438.0L482.4 441.7L483.7 445.7L484.9 450.2L486.1 455.0L487.3 460.4L488.5 466.3L489.7 472.8L491.0 480.0L492.2 487.9L493.4 496.7L494.6 506.4L495.8 517.2L497.1 529.1L498.3 542.3L499.5 556.9L500.7 573.0L501.9 591.0L503.1 610.8L504.4 632.8L505.6 657.2L506.8 684.2L508.0 714.1L509.2 747.2L510.4 784.0L511.7 824.7L512.9 869.7L514.1 919.7L515.3 975.1L516.5 1036.4L517.7 1104.4L519.0 1179.7L520.2 1263.2L521.4 1355.7L522.6 1458.2L523.8 1571.7L525.0 1697.5L526.3 1837.0L527.5 1991.5L528.7 2162.7L529.9 2352.3L531.1 2562.5L532.3 2795.4L533.6 3053.5L534.8 3339.5L536.0 3656.4" stroke="#0072BD"/><path d="M365.6 407.4L366.8 407.4L368.0 407.4L369.3 407.4L370.5 407.4L371.7 407.4L372.9 407.4L374.1 407.4L375.3 407.4L376.6 407.4L377.8 407.4L379.0 407.4L380.2 407.4L381.4 407.4L382.6 407.4L383.9 407.4L385.1 407.4L386.3 407.4L387.5 407.4L388.7 407.3L389.9 407.3L391.2 407.3L392.4 407.3L393.6 407.3L394.8 407.3L396.0 407.3L397.2 407.2L398.5 407.2L399.7 407.2L400.9 407.2L402.1 407.1L403.3 407.1L404.5 407.0L405.8 407.0L407.0 406.9L408.2 406.9L409.4 406.8L410.6 406.8L411.9 406.7L413.1 406.6L414.3 406.5L415.5 406.4L416.7 406.3L417.9 406.2L419.2 406.1L420.4 406.0L421.6 405.9L422.8 405.8L424.0 405.7L425.2 405.5L426.5 405.4L427.7 405.3L428.9 405.1L430.1 405.0L431.3 404.9L432.5 404.8L433.8 404.6L435.0 404.5L436.2 404.4L437.4 404.3L438.6 404.3L439.8 404.2L441.1 404.1L442.3 404.1L443.5 404.1L444.7 404.1L445.9 404.2L447.1 404.2L448.4 404.3L449.6 404.5L450.8 404.6L452.0 404.9L453.2 405.1L454.5 405.4L455.7 405.8L456.9 406.2L458.1 406.7L459.3 407.3L460.5 408.0L461.8 408.8L463.0 409.7L464.2 410.6L465.4 411.7L466.6 412.9L467.8 414.2L469.1 415.6L470.3 417.1L471.5 418.8L472.7 420.5L473.9 422.5L475.1 424.6L476.4 426.9L477.6 429.5L478.8 432.2L480.0 435.2L481.2 438.5L482.4 442.1L483.7 446.1L484.9 450.5L486.1 455.3L487.3 460.6L488.5 466.5L489.7 472.9L491.0 480.1L492.2 488.0L493.4 496.8L494.6 506.5L495.8 517.2L497.1 529.1L498.3 542.3L499.5 556.9L500.7 573.1L501.9 591.0L503.1 610.8L504.4 632.8L505.6 657.2L506.8 684.2L508.0 714.1L509.2 747.2L510.4 784.0L511.7 824.7L512.9 869.7L514.1 919.7L515.3 975.1L516.5 1036.4L517.7 1104.4L519.0 1179.7L520.2 1263.2L521.4 1355.7L522.6 1458.2L523.8 1571.7L525.0 1697.5L526.3 1837.0L527.5 1991.5L528.7 2162.7L529.9 2352.3L531.1 2562.5L532.3 2795.4L533.6 3053.5L534.8 3339.5L536.0 3656.4" stroke="#D95319"/><path d="M365.6 407.4L366.8 407.4L368.0 407.4L369.3 407.4L370.5 407.4L371.7 407.4L372.9 407.4L374.1 407.4L375.3 407.4L376.6 407.4L377.8 407.4L379.0 407.4L380.2 407.4L381.4 407.4L382.6 407.4L383.9 407.4L385.1 407.4L386.3 407.4L387.5 407.4L388.7 407.4L389.9 407.4L391.2 407.4L392.4 407.4L393.6 407.4L394.8 407.4L396.0 407.3L397.2 407.3L398.5 407.3L399.7 407.3L400.9 407.3L402.1 407.3L403.3 407.3L404.5 407.2L405.8 407.2L407.0 407.2L408.2 407.2L409.4 407.2L410.6 407.1L411.9 407.1L413.1 407.1L414.3 407.0L415.5 407.0L416.7 406.9L417.9 406.9L419.2 406.9L420.4 406.8L421.6 406.8L422.8 406.7L424.0 406.7L425.2 406.6L426.5 406.6L427.7 406.5L428.9 406.5L430.1 406.4L431.3 406.4L432.5 406.3L433.8 406.3L435.0 406.3L436.2 406.3L437.4 406.3L438.6 406.3L439.8 406.3L441.1 406.3L442.3 406.4L443.5 406.4L444.7 406.5L445.9 406.6L447.1 406.7L448.4 406.9L449.6 407.0L450.8 407.3L452.0 407.5L453.2 407.8L454.5 408.1L455.7 408.4L456.9 408.9L458.1 409.3L459.3 409.9L460.5 410.5L461.8 411.2L463.0 412.0L464.2 412.8L465.4 413.8L466.6 414.8L467.8 416.0L469.1 417.2L470.3 418.6L471.5 420.1L472.7 421.8L473.9 423.6L475.1 425.6L476.4 427.8L477.6 430.2L478.8 432.9L480.0 435.8L481.2 439.0L482.4 442.5L483.7 446.4L484.9 450.8L486.1 455.5L487.3 460.8L488.5 466.6L489.7 473.1L491.0 480.2L492.2 488.1L493.4 496.8L494.6 506.5L495.8 517.3L497.1 529.2L498.3 542.3L499.5 556.9L500.7 573.1L501.9 591.0L503.1 610.8L504.4 632.8L505.6 657.2L506.8 684.2L508.0 714.1L509.2 747.2L510.4 784.0L511.7 824.7L512.9 869.7L514.1 919.7L515.3 975.1L516.5 1036.4L517.7 1104.4L519.0 1179.7L520.2 1263.2L521.4 1355.7L522.6 1458.2L523.8 1571.7L525.0 1697.5L526.3 1837.0L527.5 1991.5L528.7 2162.7L529.9 2352.3L531.1 2562.5L532.3 2795.4L533.6 3053.5L534.8 3339.5L536.0 3656.4" stroke="#EDB120"/><path d="M365.6 407.4L366.8 407.4L368.0 407.4L369.3 407.4L370.5 407.4L371.7 407.4L372.9 407.4L374.1 407.4L375.3 407.4L376.6 407.4L377.8 407.4L379.0 407.4L380.2 407.4L381.4 407.4L382.6 407.4L383.9 407.4L385.1 407.4L386.3 407.4L387.5 407.4L388.7 407.4L389.9 407.4L391.2 407.4L392.4 407.4L393.6 407.4L394.8 407.4L396.0 407.4L397.2 407.4L398.5 407.4L399.7 407.4L400.9 407.4L402.1 407.4L403.3 407.4L404.5 407.4L405.8 407.5L407.0 407.5L408.2 407.5L409.4 407.5L410.6 407.5L411.9 407.5L413.1 407.5L414.3 407.5L415.5 407.5L416.7 407.5L417.9 407.6L419.2 407.6L420.4 407.6L421.6 407.6L422.8 407.6L424.0 407.7L425.2 407.7L426.5 407.7L427.7 407.8L428.9 407.8L430.1 407.8L431.3 407.9L432.5 407.9L433.8 408.0L435.0 408.0L436.2 408.1L437.4 408.2L438.6 408.3L439.8 408.4L441.1 408.5L442.3 408.6L443.5 408.7L444.7 408.9L445.9 409.0L447.1 409.2L448.4 409.4L449.6 409.6L450.8 409.9L452.0 410.1L453.2 410.4L454.5 410.8L455.7 411.1L456.9 411.5L458.1 412.0L459.3 412.5L460.5 413.0L461.8 413.6L463.0 414.3L464.2 415.0L465.4 415.8L466.6 416.8L467.8 417.8L469.1 418.9L470.3 420.1L471.5 421.5L472.7 423.0L473.9 424.7L475.1 426.6L476.4 428.7L477.6 431.0L478.8 433.5L480.0 436.4L481.2 439.5L482.4 442.9L483.7 446.8L484.9 451.0L486.1 455.8L487.3 461.0L488.5 466.8L489.7 473.2L491.0 480.3L492.2 488.2L493.4 496.9L494.6 506.6L495.8 517.3L497.1 529.2L498.3 542.3L499.5 556.9L500.7 573.1L501.9 591.0L503.1 610.8L504.4 632.8L505.6 657.2L506.8 684.2L508.0 714.1L509.2 747.2L510.4 784.0L511.7 824.7L512.9 869.7L514.1 919.7L515.3 975.1L516.5 1036.4L517.7 1104.4L519.0 1179.7L520.2 1263.2L521.4 1355.7L522.6 1458.2L523.8 1571.7L525.0 1697.5L526.3 1837.0L527.5 1991.5L528.7 2162.7L529.9 2352.3L531.1 2562.5L532.3 2795.4L533.6 3053.5L534.8 3339.5L536.0 3656.4" stroke="#7E2F8E"/></g><rect x="365.6" y="385.0" width="170.39999999999998" height="82.19999999999999" fill="none" stroke="#444" stroke-width="1"/><text x="362.3" y="388.9" font-size="9.5" text-anchor="end" fill="#4a4a4a">0.5</text><text x="362.3" y="411.2" font-size="9.5" text-anchor="end" fill="#4a4a4a">0</text><text x="362.3" y="433.4" font-size="9.5" text-anchor="end" fill="#4a4a4a">-0.5</text><text x="362.3" y="455.7" font-size="9.5" text-anchor="end" fill="#4a4a4a">-1</text><text x="370.7" y="483.6" font-size="9.5" fill="#4a4a4a">10<tspan dx="0.8" dy="-4.5" font-size="7.6">8</tspan></text><text x="449.9" y="483.6" font-size="9.5" fill="#4a4a4a">10<tspan dx="0.8" dy="-4.5" font-size="7.6">10</tspan></text><text x="530.6" y="483.6" font-size="9.5" fill="#4a4a4a">0<tspan dx="0.8" dy="-4.5" font-size="7.6">12</tspan></text><text x="450.8" y="496.8" font-size="10.4" text-anchor="middle" fill="#4a4a4a">Hz</text><text transform="translate(341.9 426.3) rotate(-90)" font-size="10.4" text-anchor="middle" fill="#4a4a4a">radians</text><rect x="475.5" y="391.2" width="53.299999999999955" height="120.80000000000001" fill="#fff" stroke="#3c3c3c" stroke-width="1.1"/><path d="M478.9 399.0H512.8" stroke="#0072BD" stroke-width="1.3" stroke-opacity="0.7"/><text x="520.3" y="402.3" font-size="9.2" text-anchor="middle" fill="#444">0</text><path d="M478.9 411.4H512.8" stroke="#D95319" stroke-width="1.3" stroke-opacity="0.7"/><text x="520.3" y="414.7" font-size="9.2" text-anchor="middle" fill="#444">1</text><path d="M478.9 423.7H512.8" stroke="#EDB120" stroke-width="1.3" stroke-opacity="0.7"/><text x="520.3" y="427.0" font-size="9.2" text-anchor="middle" fill="#444">2</text><path d="M478.9 436.1H512.8" stroke="#7E2F8E" stroke-width="1.3" stroke-opacity="0.7"/><text x="520.3" y="439.4" font-size="9.2" text-anchor="middle" fill="#444">3</text><path d="M478.9 448.4H512.8" stroke="#77AC30" stroke-width="1.3" stroke-opacity="0.7"/><text x="520.3" y="451.7" font-size="9.2" text-anchor="middle" fill="#444">4</text><path d="M478.9 460.8H512.8" stroke="#4DBEEE" stroke-width="1.3" stroke-opacity="0.7"/><text x="520.3" y="464.1" font-size="9.2" text-anchor="middle" fill="#444">5</text><path d="M478.9 473.2H512.8" stroke="#A2142F" stroke-width="1.3" stroke-opacity="0.7"/><text x="520.3" y="476.5" font-size="9.2" text-anchor="middle" fill="#444">6</text><path d="M478.9 485.5H512.8" stroke="#0072BD" stroke-width="1.3" stroke-opacity="0.7"/><text x="520.3" y="488.8" font-size="9.2" text-anchor="middle" fill="#444">7</text><path d="M478.9 497.9H512.8" stroke="#D95319" stroke-width="1.3" stroke-opacity="0.7"/><text x="520.3" y="501.2" font-size="9.2" text-anchor="middle" fill="#444">8</text><path d="M478.9 510.2H512.8" stroke="#EDB120" stroke-width="1.3" stroke-opacity="0.7"/><text x="520.3" y="513.5" font-size="9.2" text-anchor="middle" fill="#444">9</text><text x="357.8" y="253.2" font-size="10.6" font-weight="bold" fill="#262626" textLength="73.6" lengthAdjust="spacingAndGlyphs">SerDes CTLE T</text><text x="536.9" y="253.2" font-size="10.6" font-weight="bold" fill="#262626" textLength="6.9" lengthAdjust="spacingAndGlyphs">ly</text><g fill="none" stroke="#a8a8a8" stroke-width="1.1" stroke-linejoin="round"><path d="M435 253.3V250.6H446.2V253.3"/><path d="M435 253.3H446.2" stroke-width="0.9"/><path d="M438.6 250.4L439.4 247.2L444.6 242.4L447.4 245L442.2 250L438.6 250.4Z"/><path d="M443 244L445.8 246.6"/><path d="M447.2 254.2L449.2 254.2L449.2 252.2Z" fill="#6e6e6e" stroke="none"/></g><g fill="none" stroke="#6e6e6e" stroke-width="1.1" stroke-linejoin="round"><path d="M459.8 241.3H463V246.6L464.6 249.4L465 254.2H454.2L457.6 249.4L459.8 246.6Z"/><path d="M457.6 249.6H464.6"/><path d="M459.8 246.8H463"/><path d="M456.4 254L461 251.2M459.4 254L463.4 251.4" stroke-width="0.8"/></g><g fill="none" stroke="#6e6e6e" stroke-width="1.05" stroke-linejoin="round" stroke-linecap="round"><path d="M472.6 254.2C471.6 251.6 470.4 250 469.6 248.2C469.2 247 470.6 246.4 471.4 247.4L472.8 249.4V243.4C472.8 242.2 474.6 242.2 474.6 243.4V247.4V242.4C474.6 241.2 476.6 241.2 476.6 242.4V247.4V242.8C476.6 241.6 478.6 241.6 478.6 242.8V247.6V244C478.6 242.8 480.4 242.8 480.6 244L482.6 248.4C482.8 250.4 481.6 252.2 480.8 254.2Z"/></g><g fill="none" stroke="#6e6e6e" stroke-width="1.15" stroke-linecap="round"><circle cx="492.2" cy="246.8" r="5.1"/><path d="M496.0 250.6L499.8 254.4"/><path d="M489.4 246.8H495.0"/><path d="M492.2 244V249.6"/></g><g fill="none" stroke="#6e6e6e" stroke-width="1.15" stroke-linecap="round"><circle cx="510.1" cy="246.8" r="5.1"/><path d="M513.9 250.6L517.7 254.4"/><path d="M507.3 246.8H512.9"/></g><g fill="none" stroke="#6e6e6e" stroke-width="1.1" stroke-linejoin="miter"><path d="M520.8 248.6L527.6 241.9L534.6 248.6"/><path d="M522.8 247.2V254.2H526V250.2H529.2V254.2H532.4V247.2"/><path d="M531 243.6V242.3H532.6V246.2"/></g></svg>
<div class="abs" style="left:557px;top:236px;width:1px;height:270px;background:#c9c9c9"></div><div class="abs" style="left:558.1px;top:216px;width:1.3px;height:290px;background:#999"></div><div class="abs" style="left:560px;top:235px;width:310px;height:1px;background:#cfcfcf"></div><div class="grip" style="left:562px;top:221px"></div><div class="abs" style="left:565.8px;top:216.5px;width:50.2px;height:19.5px;background:#fff;border:1px solid #c6c6c6;border-bottom:none"></div><div class="ui" style="left:574.3px;top:220.3px;line-height:14px;letter-spacing:-1.15px;color:#5c5c5c">BER</div><div class="ui" style="left:605px;top:218px;line-height:14px;font-size:11px;color:#888">×</div><div class="abs" style="left:869px;top:236px;width:1px;height:270px;background:#c9c9c9"></div><div class="abs" style="left:560px;top:505px;width:310px;height:1px;background:#c9c9c9"></div><svg class="abs" style="left:560px;top:236px" width="310" height="270" viewBox="560 236 310 270" font-family="Liberation Sans, sans-serif"><defs><clipPath id="axc"><rect x="610.3" y="257.0" width="207.4000000000001" height="212.0"/></clipPath><filter id="heat" filterUnits="userSpaceOnUse" x="600.3" y="247.0" width="227.4000000000001" height="232.0" color-interpolation-filters="sRGB"><feGaussianBlur stdDeviation="1.0"/><feComponentTransfer><feFuncR type="table" tableValues="1.000 0.000 0.000 0.000 0.000 0.000 0.000 0.000 0.000 0.000 0.000 0.000 0.000 0.000 0.094 0.470 0.859 1.000 1.000 1.000 0.935 0.873 0.842 0.810 0.778 0.746 0.715 0.697 0.692 0.686 0.681 0.675 0.670 0.664 0.659 0.653 0.648 0.642 0.637 0.631 0.626 0.620 0.615 0.609 0.604 0.599 0.593 0.588 0.582 0.577 0.571 0.566 0.560 0.555 0.549 0.544 0.538 0.533 0.527 0.522 0.516 0.511 0.505 0.500"/><feFuncG type="table" tableValues="1.000 0.000 0.000 0.000 0.000 0.000 0.019 0.157 0.294 0.432 0.569 0.701 0.832 0.963 1.000 1.000 1.000 0.752 0.370 0.153 0.000 0.000 0.000 0.000 0.000 0.000 0.000 0.000 0.000 0.000 0.000 0.000 0.000 0.000 0.000 0.000 0.000 0.000 0.000 0.000 0.000 0.000 0.000 0.000 0.000 0.000 0.000 0.000 0.000 0.000 0.000 0.000 0.000 0.000 0.000 0.000 0.000 0.000 0.000 0.000 0.000 0.000 0.000 0.000"/><feFuncB type="table" tableValues="1.000 0.530 0.503 0.535 0.684 0.854 1.000 1.000 1.000 1.000 1.000 1.000 1.000 1.000 0.906 0.530 0.141 0.000 0.000 0.000 0.000 0.000 0.000 0.000 0.000 0.000 0.000 0.000 0.000 0.000 0.000 0.000 0.000 0.000 0.000 0.000 0.000 0.000 0.000 0.000 0.000 0.000 0.000 0.000 0.000 0.000 0.000 0.000 0.000 0.000 0.000 0.000 0.000 0.000 0.000 0.000 0.000 0.000 0.000 0.000 0.000 0.000 0.000 0.000"/></feComponentTransfer></filter></defs><g clip-path="url(#axc)"><g filter="url(#heat)"><rect x="598.3" y="245.0" width="231.4000000000001" height="236.0" fill="#000"/><path d="M603.3 363.0L605.5 360.9L607.8 358.9L610.0 357.0L612.2 355.1L614.4 353.4L616.6 351.6L618.8 349.9L621.0 348.1L623.3 346.3L625.5 344.2L627.7 342.0L629.9 339.6L632.1 337.1L634.3 334.5L636.5 331.9L638.7 329.5L641.0 327.2L643.2 325.0L645.4 323.0L647.6 320.9L649.8 319.0L652.0 317.0L654.2 315.2L656.5 313.3L658.7 311.5L660.9 309.8L663.1 308.1L665.3 306.4L667.5 304.8L669.7 303.2L671.9 301.7L674.2 300.2L676.4 298.7L678.6 297.3L680.8 296.0L683.0 294.8L685.2 293.7L687.4 292.7L689.7 291.8L691.9 291.0L694.1 290.2L696.3 289.6L698.5 288.9L700.7 288.3L702.9 287.7L705.1 287.1L707.4 286.6L709.6 286.0L711.8 285.4L714.0 284.8M714.0 284.8L715.9 284.2L717.7 283.6L719.6 283.0L721.4 282.4L723.3 281.8L725.1 281.3L727.0 280.7L728.9 280.2L730.7 279.8L732.6 279.4L734.4 279.1L736.3 278.8L738.2 278.5L740.0 278.2L741.9 277.9L743.7 277.7L745.6 277.5L747.4 277.3L749.3 277.2L751.2 277.0M751.2 277.0L753.0 276.9L754.8 276.8L756.7 276.7L758.5 276.6L760.4 276.5L762.2 276.4L764.0 276.4L765.9 276.3L767.7 276.2L769.5 276.2L771.4 276.1L773.2 276.1L775.1 276.0L776.9 276.0L778.7 275.9L780.6 275.9L782.4 275.9L784.2 275.8L786.1 275.8L787.9 275.8L789.8 275.8L791.6 275.7L793.4 275.7L795.3 275.7L797.1 275.7L798.9 275.6L800.8 275.6L802.6 275.6L804.5 275.6L806.3 275.6L808.1 275.5L810.0 275.5L811.8 275.5L813.6 275.5L815.5 275.5L817.3 275.5L819.2 275.5L821.0 275.5L822.8 275.5L824.7 275.5M603.3 377.6L605.5 375.1L607.8 372.6L610.0 370.1L612.2 367.5L614.4 365.0L616.6 362.4L618.8 359.9L621.0 357.5L623.3 355.1L625.5 352.6L627.7 350.2L629.9 347.7L632.1 345.2L634.3 342.7L636.5 340.3L638.7 337.9L641.0 335.7L643.2 333.4L645.4 331.2L647.6 329.0L649.8 326.9L652.0 324.8L654.2 322.8L656.5 321.0L658.7 319.1L660.9 317.4L663.1 315.7L665.3 314.0L667.5 312.4L669.7 310.9L671.9 309.3L674.2 307.7L676.4 306.2L678.6 304.7L680.8 303.2L683.0 301.8L685.2 300.6L687.4 299.5L689.7 298.5L691.9 297.5L694.1 296.6L696.3 295.8L698.5 295.1L700.7 294.6L702.9 294.2L705.1 293.7L707.4 293.4L709.6 293.1L711.8 292.9L714.0 292.7M714.0 292.7L715.9 292.6L717.7 292.5L719.6 292.4L721.4 292.3L723.3 292.2L725.1 292.1L727.0 292.1L728.9 292.0L730.7 291.9L732.6 291.9L734.4 291.8L736.3 291.8L738.2 291.7L740.0 291.7L741.9 291.6L743.7 291.6L745.6 291.5L747.4 291.5L749.3 291.5L751.2 291.5M751.2 291.5L753.0 291.4L754.8 291.4L756.7 291.4L758.5 291.4L760.4 291.3L762.2 291.3L764.0 291.3L765.9 291.3L767.7 291.2L769.5 291.2L771.4 291.2L773.2 291.2L775.1 291.2L776.9 291.1L778.7 291.1L780.6 291.1L782.4 291.1L784.2 291.1L786.1 291.1L787.9 291.0L789.8 291.0L791.6 291.0L793.4 291.0L795.3 291.0L797.1 291.0L798.9 291.0L800.8 291.0L802.6 291.0L804.5 290.9L806.3 290.9L808.1 290.9L810.0 290.9L811.8 290.9L813.6 290.9L815.5 290.9L817.3 290.9L819.2 290.9L821.0 290.9L822.8 290.9L824.7 290.9M603.3 276.7L606.3 276.9L609.2 277.1L612.2 277.3L615.2 277.5L618.1 277.7L621.1 277.9L624.0 278.1L627.0 278.3L629.9 278.5L632.9 278.8L635.9 279.0L638.8 279.2L641.8 279.4L644.7 279.7L647.7 279.9L650.6 280.1L653.6 280.4L656.6 280.6L659.5 280.8L662.5 281.0L665.4 281.2L668.4 281.4L671.3 281.6L674.3 281.8L677.2 281.9L680.2 282.1L683.2 282.3L686.1 282.4L689.1 282.6L692.0 282.8L695.0 283.0L697.9 283.2L700.9 283.4L703.9 283.7L706.8 284.0L709.8 284.3L712.7 284.6L715.7 285.0L718.6 285.6L721.6 286.3L724.6 287.1L727.5 288.0L730.5 289.0L733.4 290.0L736.4 291.0L739.3 292.2L742.3 293.4L745.3 294.9L748.2 296.6L751.2 298.4M751.2 298.4L753.0 299.6L754.8 300.9L756.7 302.1L758.5 303.4L760.4 304.7L762.2 306.0L764.0 307.4L765.9 308.8L767.7 310.2L769.5 311.7L771.4 313.2L773.2 314.7L775.1 316.2L776.9 317.8L778.7 319.4L780.6 321.1L782.4 322.8L784.2 324.5L786.1 326.2L787.9 328.1L789.8 330.0L791.6 332.0L793.4 334.2L795.3 336.3L797.1 338.5L798.9 340.5L800.8 342.5L802.6 344.3L804.5 346.0L806.3 347.6L808.1 349.1L810.0 350.5L811.8 351.9L813.6 353.4L815.5 354.9L817.3 356.4L819.2 358.0L821.0 359.6L822.8 361.3L824.7 363.0M603.3 290.8L606.3 290.9L609.2 290.9L612.2 290.9L615.2 291.0L618.1 291.0L621.1 291.1L624.0 291.1L627.0 291.2L629.9 291.2L632.9 291.3L635.9 291.3L638.8 291.4L641.8 291.4L644.7 291.5L647.7 291.5L650.6 291.6L653.6 291.6L656.6 291.7L659.5 291.7L662.5 291.8L665.4 291.8L668.4 291.9L671.3 291.9L674.3 291.9L677.2 292.0L680.2 292.0L683.2 292.0L686.1 292.1L689.1 292.1L692.0 292.1L695.0 292.2L697.9 292.2L700.9 292.3L703.9 292.4L706.8 292.5L709.8 292.5L712.7 292.6L715.7 292.8L718.6 293.1L721.6 293.5L724.6 294.0L727.5 294.6L730.5 295.4L733.4 296.4L736.4 297.6L739.3 298.9L742.3 300.4L745.3 302.0L748.2 303.9L751.2 305.9M751.2 305.9L753.0 307.2L754.8 308.5L756.7 309.7L758.5 311.0L760.4 312.3L762.2 313.7L764.0 315.0L765.9 316.4L767.7 317.8L769.5 319.3L771.4 320.8L773.2 322.4L775.1 324.0L776.9 325.7L778.7 327.4L780.6 329.2L782.4 331.0L784.2 332.8L786.1 334.7L787.9 336.6L789.8 338.5L791.6 340.4L793.4 342.5L795.3 344.5L797.1 346.6L798.9 348.6L800.8 350.7L802.6 352.7L804.5 354.7L806.3 356.8L808.1 358.8L810.0 360.8L811.8 362.9L813.6 365.0L815.5 367.1L817.3 369.3L819.2 371.4L821.0 373.4L822.8 375.5L824.7 377.6M714.0 287.0L716.8 286.4L719.5 285.7L722.3 285.0L725.1 284.3L727.8 283.6L730.6 283.1L733.4 282.6L736.1 282.2L738.9 281.7L741.7 281.4L744.4 281.0L747.2 280.8L750.0 280.7L752.7 280.6L755.5 280.5L758.3 280.4L761.0 280.4L763.8 280.3L766.6 280.3L769.3 280.2L772.1 280.2L774.9 280.2L777.6 280.2L780.4 280.2L783.2 280.2L785.9 280.2L788.7 280.2L791.5 280.2L794.2 280.2L797.0 280.2L799.8 280.2L802.5 280.2L805.3 280.2L808.1 280.2L810.8 280.2L813.6 280.2L816.4 280.2L819.1 280.2L821.9 280.2L824.7 280.2M603.3 276.1L606.1 276.5L608.9 276.9L611.6 277.3L614.4 277.7L617.2 278.1L619.9 278.5L622.7 278.9L625.5 279.2L628.2 279.6L631.0 279.9L633.8 280.2L636.5 280.5L639.3 280.8L642.1 281.1L644.8 281.4L647.6 281.6L650.4 281.9L653.1 282.1L655.9 282.4L658.7 282.6L661.4 282.8L664.2 283.0L667.0 283.2L669.7 283.4L672.5 283.5L675.3 283.7L678.0 283.9L680.8 284.0L683.6 284.1L686.3 284.2L689.1 284.3L691.9 284.4L694.6 284.5L697.4 284.6L700.2 284.6L702.9 284.7L705.7 284.7L708.5 284.8L711.2 284.8L714.0 284.8M603.3 290.7L605.8 290.8L608.2 290.8L610.7 290.9L613.2 291.0L615.6 291.1L618.1 291.2L620.5 291.3L623.0 291.3L625.5 291.4L627.9 291.5L630.4 291.5L632.8 291.6L635.3 291.7L637.8 291.7L640.2 291.8L642.7 291.9L645.1 291.9L647.6 292.0L650.1 292.0L652.5 292.1L655.0 292.1L657.4 292.2L659.9 292.2L662.4 292.2L664.8 292.3L667.3 292.3L669.7 292.4L672.2 292.4L674.7 292.4L677.1 292.5L679.6 292.5L682.0 292.5L684.5 292.5L686.9 292.6L689.4 292.6L691.9 292.6L694.3 292.6L696.8 292.6L699.2 292.7L701.7 292.7L704.2 292.7L706.6 292.7L709.1 292.7L711.5 292.7L714.0 292.7L716.5 292.7L718.9 292.7L721.4 292.7L723.8 292.7L726.3 292.7L728.8 292.7L731.2 292.6L733.7 292.6L736.1 292.6L738.6 292.6L741.1 292.6L743.5 292.5L746.0 292.5L748.4 292.5L750.9 292.5L753.3 292.4L755.8 292.4L758.3 292.4L760.7 292.3L763.2 292.3L765.6 292.2L768.1 292.2L770.6 292.2L773.0 292.1L775.5 292.1L777.9 292.0L780.4 292.0L782.9 291.9L785.3 291.9L787.8 291.8L790.2 291.7L792.7 291.7L795.2 291.6L797.6 291.5L800.1 291.5L802.5 291.4L805.0 291.3L807.5 291.3L809.9 291.2L812.4 291.1L814.8 291.0L817.3 290.9L819.8 290.8L822.2 290.8L824.7 290.7M690.8 291.3L693.1 290.8L695.4 290.3L697.7 289.9L700.1 289.5L702.4 289.2L704.7 289.0L707.0 288.8L709.4 288.6L711.7 288.5L714.0 288.5L716.3 288.5L718.6 288.6L721.0 288.8L723.3 289.0L725.6 289.2L727.9 289.5L730.3 289.9L732.6 290.3L734.9 290.8L737.2 291.3M603.3 363.0L605.5 365.1L607.8 367.1L610.0 369.0L612.2 370.9L614.4 372.6L616.6 374.4L618.8 376.1L621.0 377.9L623.3 379.7L625.5 381.8L627.7 384.0L629.9 386.4L632.1 388.9L634.3 391.5L636.5 394.1L638.7 396.5L641.0 398.8L643.2 401.0L645.4 403.0L647.6 405.1L649.8 407.0L652.0 409.0L654.2 410.8L656.5 412.7L658.7 414.5L660.9 416.2L663.1 417.9L665.3 419.6L667.5 421.2L669.7 422.8L671.9 424.3L674.2 425.8L676.4 427.3L678.6 428.7L680.8 430.0L683.0 431.2L685.2 432.3L687.4 433.3L689.7 434.2L691.9 435.0L694.1 435.8L696.3 436.4L698.5 437.1L700.7 437.7L702.9 438.3L705.1 438.9L707.4 439.4L709.6 440.0L711.8 440.6L714.0 441.2M714.0 441.2L715.9 441.8L717.7 442.4L719.6 443.0L721.4 443.6L723.3 444.2L725.1 444.7L727.0 445.3L728.9 445.8L730.7 446.2L732.6 446.6L734.4 446.9L736.3 447.2L738.2 447.5L740.0 447.8L741.9 448.1L743.7 448.3L745.6 448.5L747.4 448.7L749.3 448.8L751.2 449.0M751.2 449.0L753.0 449.1L754.8 449.2L756.7 449.3L758.5 449.4L760.4 449.5L762.2 449.6L764.0 449.6L765.9 449.7L767.7 449.8L769.5 449.8L771.4 449.9L773.2 449.9L775.1 450.0L776.9 450.0L778.7 450.1L780.6 450.1L782.4 450.1L784.2 450.2L786.1 450.2L787.9 450.2L789.8 450.2L791.6 450.3L793.4 450.3L795.3 450.3L797.1 450.3L798.9 450.4L800.8 450.4L802.6 450.4L804.5 450.4L806.3 450.4L808.1 450.5L810.0 450.5L811.8 450.5L813.6 450.5L815.5 450.5L817.3 450.5L819.2 450.5L821.0 450.5L822.8 450.5L824.7 450.5M603.3 348.4L605.5 350.9L607.8 353.4L610.0 355.9L612.2 358.5L614.4 361.0L616.6 363.6L618.8 366.1L621.0 368.5L623.3 370.9L625.5 373.4L627.7 375.8L629.9 378.3L632.1 380.8L634.3 383.3L636.5 385.7L638.7 388.1L641.0 390.3L643.2 392.6L645.4 394.8L647.6 397.0L649.8 399.1L652.0 401.2L654.2 403.2L656.5 405.0L658.7 406.9L660.9 408.6L663.1 410.3L665.3 412.0L667.5 413.6L669.7 415.1L671.9 416.7L674.2 418.3L676.4 419.8L678.6 421.3L680.8 422.8L683.0 424.2L685.2 425.4L687.4 426.5L689.7 427.5L691.9 428.5L694.1 429.4L696.3 430.2L698.5 430.9L700.7 431.4L702.9 431.8L705.1 432.3L707.4 432.6L709.6 432.9L711.8 433.1L714.0 433.3M714.0 433.3L715.9 433.4L717.7 433.5L719.6 433.6L721.4 433.7L723.3 433.8L725.1 433.9L727.0 433.9L728.9 434.0L730.7 434.1L732.6 434.1L734.4 434.2L736.3 434.2L738.2 434.3L740.0 434.3L741.9 434.4L743.7 434.4L745.6 434.5L747.4 434.5L749.3 434.5L751.2 434.5M751.2 434.5L753.0 434.6L754.8 434.6L756.7 434.6L758.5 434.6L760.4 434.7L762.2 434.7L764.0 434.7L765.9 434.7L767.7 434.8L769.5 434.8L771.4 434.8L773.2 434.8L775.1 434.8L776.9 434.9L778.7 434.9L780.6 434.9L782.4 434.9L784.2 434.9L786.1 434.9L787.9 435.0L789.8 435.0L791.6 435.0L793.4 435.0L795.3 435.0L797.1 435.0L798.9 435.0L800.8 435.0L802.6 435.0L804.5 435.1L806.3 435.1L808.1 435.1L810.0 435.1L811.8 435.1L813.6 435.1L815.5 435.1L817.3 435.1L819.2 435.1L821.0 435.1L822.8 435.1L824.7 435.1M603.3 449.3L606.3 449.1L609.2 448.9L612.2 448.7L615.2 448.5L618.1 448.3L621.1 448.1L624.0 447.9L627.0 447.7L629.9 447.5L632.9 447.2L635.9 447.0L638.8 446.8L641.8 446.6L644.7 446.3L647.7 446.1L650.6 445.9L653.6 445.6L656.6 445.4L659.5 445.2L662.5 445.0L665.4 444.8L668.4 444.6L671.3 444.4L674.3 444.2L677.2 444.1L680.2 443.9L683.2 443.7L686.1 443.6L689.1 443.4L692.0 443.2L695.0 443.0L697.9 442.8L700.9 442.6L703.9 442.3L706.8 442.0L709.8 441.7L712.7 441.4L715.7 441.0L718.6 440.4L721.6 439.7L724.6 438.9L727.5 438.0L730.5 437.0L733.4 436.0L736.4 435.0L739.3 433.8L742.3 432.6L745.3 431.1L748.2 429.4L751.2 427.6M751.2 427.6L753.0 426.4L754.8 425.1L756.7 423.9L758.5 422.6L760.4 421.3L762.2 420.0L764.0 418.6L765.9 417.2L767.7 415.8L769.5 414.3L771.4 412.8L773.2 411.3L775.1 409.8L776.9 408.2L778.7 406.6L780.6 404.9L782.4 403.2L784.2 401.5L786.1 399.8L787.9 397.9L789.8 396.0L791.6 394.0L793.4 391.8L795.3 389.7L797.1 387.5L798.9 385.5L800.8 383.5L802.6 381.7L804.5 380.0L806.3 378.4L808.1 376.9L810.0 375.5L811.8 374.1L813.6 372.6L815.5 371.1L817.3 369.6L819.2 368.0L821.0 366.4L822.8 364.7L824.7 363.0M603.3 435.2L606.3 435.1L609.2 435.1L612.2 435.1L615.2 435.0L618.1 435.0L621.1 434.9L624.0 434.9L627.0 434.8L629.9 434.8L632.9 434.7L635.9 434.7L638.8 434.6L641.8 434.6L644.7 434.5L647.7 434.5L650.6 434.4L653.6 434.4L656.6 434.3L659.5 434.3L662.5 434.2L665.4 434.2L668.4 434.1L671.3 434.1L674.3 434.1L677.2 434.0L680.2 434.0L683.2 434.0L686.1 433.9L689.1 433.9L692.0 433.9L695.0 433.8L697.9 433.8L700.9 433.7L703.9 433.6L706.8 433.5L709.8 433.5L712.7 433.4L715.7 433.2L718.6 432.9L721.6 432.5L724.6 432.0L727.5 431.4L730.5 430.6L733.4 429.6L736.4 428.4L739.3 427.1L742.3 425.6L745.3 424.0L748.2 422.1L751.2 420.1M751.2 420.1L753.0 418.8L754.8 417.5L756.7 416.3L758.5 415.0L760.4 413.7L762.2 412.3L764.0 411.0L765.9 409.6L767.7 408.2L769.5 406.7L771.4 405.2L773.2 403.6L775.1 402.0L776.9 400.3L778.7 398.6L780.6 396.8L782.4 395.0L784.2 393.2L786.1 391.3L787.9 389.4L789.8 387.5L791.6 385.6L793.4 383.5L795.3 381.5L797.1 379.4L798.9 377.4L800.8 375.3L802.6 373.3L804.5 371.3L806.3 369.2L808.1 367.2L810.0 365.2L811.8 363.1L813.6 361.0L815.5 358.9L817.3 356.7L819.2 354.6L821.0 352.6L822.8 350.5L824.7 348.4M714.0 439.0L716.8 439.6L719.5 440.3L722.3 441.0L725.1 441.7L727.8 442.4L730.6 442.9L733.4 443.4L736.1 443.8L738.9 444.3L741.7 444.6L744.4 445.0L747.2 445.2L750.0 445.3L752.7 445.4L755.5 445.5L758.3 445.6L761.0 445.6L763.8 445.7L766.6 445.7L769.3 445.8L772.1 445.8L774.9 445.8L777.6 445.8L780.4 445.8L783.2 445.8L785.9 445.8L788.7 445.8L791.5 445.8L794.2 445.8L797.0 445.8L799.8 445.8L802.5 445.8L805.3 445.8L808.1 445.8L810.8 445.8L813.6 445.8L816.4 445.8L819.1 445.8L821.9 445.8L824.7 445.8M603.3 449.9L606.1 449.5L608.9 449.1L611.6 448.7L614.4 448.3L617.2 447.9L619.9 447.5L622.7 447.1L625.5 446.8L628.2 446.4L631.0 446.1L633.8 445.8L636.5 445.5L639.3 445.2L642.1 444.9L644.8 444.6L647.6 444.4L650.4 444.1L653.1 443.9L655.9 443.6L658.7 443.4L661.4 443.2L664.2 443.0L667.0 442.8L669.7 442.6L672.5 442.5L675.3 442.3L678.0 442.1L680.8 442.0L683.6 441.9L686.3 441.8L689.1 441.7L691.9 441.6L694.6 441.5L697.4 441.4L700.2 441.4L702.9 441.3L705.7 441.3L708.5 441.2L711.2 441.2L714.0 441.2M603.3 435.3L605.8 435.2L608.2 435.2L610.7 435.1L613.2 435.0L615.6 434.9L618.1 434.8L620.5 434.7L623.0 434.7L625.5 434.6L627.9 434.5L630.4 434.5L632.8 434.4L635.3 434.3L637.8 434.3L640.2 434.2L642.7 434.1L645.1 434.1L647.6 434.0L650.1 434.0L652.5 433.9L655.0 433.9L657.4 433.8L659.9 433.8L662.4 433.8L664.8 433.7L667.3 433.7L669.7 433.6L672.2 433.6L674.7 433.6L677.1 433.5L679.6 433.5L682.0 433.5L684.5 433.5L686.9 433.4L689.4 433.4L691.9 433.4L694.3 433.4L696.8 433.4L699.2 433.3L701.7 433.3L704.2 433.3L706.6 433.3L709.1 433.3L711.5 433.3L714.0 433.3L716.5 433.3L718.9 433.3L721.4 433.3L723.8 433.3L726.3 433.3L728.8 433.3L731.2 433.4L733.7 433.4L736.1 433.4L738.6 433.4L741.1 433.4L743.5 433.5L746.0 433.5L748.4 433.5L750.9 433.5L753.3 433.6L755.8 433.6L758.3 433.6L760.7 433.7L763.2 433.7L765.6 433.8L768.1 433.8L770.6 433.8L773.0 433.9L775.5 433.9L777.9 434.0L780.4 434.0L782.9 434.1L785.3 434.1L787.8 434.2L790.2 434.3L792.7 434.3L795.2 434.4L797.6 434.5L800.1 434.5L802.5 434.6L805.0 434.7L807.5 434.7L809.9 434.8L812.4 434.9L814.8 435.0L817.3 435.1L819.8 435.2L822.2 435.2L824.7 435.3M690.8 434.7L693.1 435.2L695.4 435.7L697.7 436.1L700.1 436.5L702.4 436.8L704.7 437.0L707.0 437.2L709.4 437.4L711.7 437.5L714.0 437.5L716.3 437.5L718.6 437.4L721.0 437.2L723.3 437.0L725.6 436.8L727.9 436.5L730.3 436.1L732.6 435.7L734.9 435.2L737.2 434.7" fill="none" stroke="#fff" stroke-opacity="0.045" stroke-width="12.5" stroke-linejoin="round"/><path d="M603.3 363.0L605.5 360.9L607.8 358.9L610.0 357.0L612.2 355.1L614.4 353.4L616.6 351.6L618.8 349.9L621.0 348.1L623.3 346.3L625.5 344.2L627.7 342.0L629.9 339.6L632.1 337.1L634.3 334.5L636.5 331.9L638.7 329.5L641.0 327.2L643.2 325.0L645.4 323.0L647.6 320.9L649.8 319.0L652.0 317.0L654.2 315.2L656.5 313.3L658.7 311.5L660.9 309.8L663.1 308.1L665.3 306.4L667.5 304.8L669.7 303.2L671.9 301.7L674.2 300.2L676.4 298.7L678.6 297.3L680.8 296.0L683.0 294.8L685.2 293.7L687.4 292.7L689.7 291.8L691.9 291.0L694.1 290.2L696.3 289.6L698.5 288.9L700.7 288.3L702.9 287.7L705.1 287.1L707.4 286.6L709.6 286.0L711.8 285.4L714.0 284.8M714.0 284.8L715.9 284.2L717.7 283.6L719.6 283.0L721.4 282.4L723.3 281.8L725.1 281.3L727.0 280.7L728.9 280.2L730.7 279.8L732.6 279.4L734.4 279.1L736.3 278.8L738.2 278.5L740.0 278.2L741.9 277.9L743.7 277.7L745.6 277.5L747.4 277.3L749.3 277.2L751.2 277.0M751.2 277.0L753.0 276.9L754.8 276.8L756.7 276.7L758.5 276.6L760.4 276.5L762.2 276.4L764.0 276.4L765.9 276.3L767.7 276.2L769.5 276.2L771.4 276.1L773.2 276.1L775.1 276.0L776.9 276.0L778.7 275.9L780.6 275.9L782.4 275.9L784.2 275.8L786.1 275.8L787.9 275.8L789.8 275.8L791.6 275.7L793.4 275.7L795.3 275.7L797.1 275.7L798.9 275.6L800.8 275.6L802.6 275.6L804.5 275.6L806.3 275.6L808.1 275.5L810.0 275.5L811.8 275.5L813.6 275.5L815.5 275.5L817.3 275.5L819.2 275.5L821.0 275.5L822.8 275.5L824.7 275.5M603.3 377.6L605.5 375.1L607.8 372.6L610.0 370.1L612.2 367.5L614.4 365.0L616.6 362.4L618.8 359.9L621.0 357.5L623.3 355.1L625.5 352.6L627.7 350.2L629.9 347.7L632.1 345.2L634.3 342.7L636.5 340.3L638.7 337.9L641.0 335.7L643.2 333.4L645.4 331.2L647.6 329.0L649.8 326.9L652.0 324.8L654.2 322.8L656.5 321.0L658.7 319.1L660.9 317.4L663.1 315.7L665.3 314.0L667.5 312.4L669.7 310.9L671.9 309.3L674.2 307.7L676.4 306.2L678.6 304.7L680.8 303.2L683.0 301.8L685.2 300.6L687.4 299.5L689.7 298.5L691.9 297.5L694.1 296.6L696.3 295.8L698.5 295.1L700.7 294.6L702.9 294.2L705.1 293.7L707.4 293.4L709.6 293.1L711.8 292.9L714.0 292.7M714.0 292.7L715.9 292.6L717.7 292.5L719.6 292.4L721.4 292.3L723.3 292.2L725.1 292.1L727.0 292.1L728.9 292.0L730.7 291.9L732.6 291.9L734.4 291.8L736.3 291.8L738.2 291.7L740.0 291.7L741.9 291.6L743.7 291.6L745.6 291.5L747.4 291.5L749.3 291.5L751.2 291.5M751.2 291.5L753.0 291.4L754.8 291.4L756.7 291.4L758.5 291.4L760.4 291.3L762.2 291.3L764.0 291.3L765.9 291.3L767.7 291.2L769.5 291.2L771.4 291.2L773.2 291.2L775.1 291.2L776.9 291.1L778.7 291.1L780.6 291.1L782.4 291.1L784.2 291.1L786.1 291.1L787.9 291.0L789.8 291.0L791.6 291.0L793.4 291.0L795.3 291.0L797.1 291.0L798.9 291.0L800.8 291.0L802.6 291.0L804.5 290.9L806.3 290.9L808.1 290.9L810.0 290.9L811.8 290.9L813.6 290.9L815.5 290.9L817.3 290.9L819.2 290.9L821.0 290.9L822.8 290.9L824.7 290.9M603.3 276.7L606.3 276.9L609.2 277.1L612.2 277.3L615.2 277.5L618.1 277.7L621.1 277.9L624.0 278.1L627.0 278.3L629.9 278.5L632.9 278.8L635.9 279.0L638.8 279.2L641.8 279.4L644.7 279.7L647.7 279.9L650.6 280.1L653.6 280.4L656.6 280.6L659.5 280.8L662.5 281.0L665.4 281.2L668.4 281.4L671.3 281.6L674.3 281.8L677.2 281.9L680.2 282.1L683.2 282.3L686.1 282.4L689.1 282.6L692.0 282.8L695.0 283.0L697.9 283.2L700.9 283.4L703.9 283.7L706.8 284.0L709.8 284.3L712.7 284.6L715.7 285.0L718.6 285.6L721.6 286.3L724.6 287.1L727.5 288.0L730.5 289.0L733.4 290.0L736.4 291.0L739.3 292.2L742.3 293.4L745.3 294.9L748.2 296.6L751.2 298.4M751.2 298.4L753.0 299.6L754.8 300.9L756.7 302.1L758.5 303.4L760.4 304.7L762.2 306.0L764.0 307.4L765.9 308.8L767.7 310.2L769.5 311.7L771.4 313.2L773.2 314.7L775.1 316.2L776.9 317.8L778.7 319.4L780.6 321.1L782.4 322.8L784.2 324.5L786.1 326.2L787.9 328.1L789.8 330.0L791.6 332.0L793.4 334.2L795.3 336.3L797.1 338.5L798.9 340.5L800.8 342.5L802.6 344.3L804.5 346.0L806.3 347.6L808.1 349.1L810.0 350.5L811.8 351.9L813.6 353.4L815.5 354.9L817.3 356.4L819.2 358.0L821.0 359.6L822.8 361.3L824.7 363.0M603.3 290.8L606.3 290.9L609.2 290.9L612.2 290.9L615.2 291.0L618.1 291.0L621.1 291.1L624.0 291.1L627.0 291.2L629.9 291.2L632.9 291.3L635.9 291.3L638.8 291.4L641.8 291.4L644.7 291.5L647.7 291.5L650.6 291.6L653.6 291.6L656.6 291.7L659.5 291.7L662.5 291.8L665.4 291.8L668.4 291.9L671.3 291.9L674.3 291.9L677.2 292.0L680.2 292.0L683.2 292.0L686.1 292.1L689.1 292.1L692.0 292.1L695.0 292.2L697.9 292.2L700.9 292.3L703.9 292.4L706.8 292.5L709.8 292.5L712.7 292.6L715.7 292.8L718.6 293.1L721.6 293.5L724.6 294.0L727.5 294.6L730.5 295.4L733.4 296.4L736.4 297.6L739.3 298.9L742.3 300.4L745.3 302.0L748.2 303.9L751.2 305.9M751.2 305.9L753.0 307.2L754.8 308.5L756.7 309.7L758.5 311.0L760.4 312.3L762.2 313.7L764.0 315.0L765.9 316.4L767.7 317.8L769.5 319.3L771.4 320.8L773.2 322.4L775.1 324.0L776.9 325.7L778.7 327.4L780.6 329.2L782.4 331.0L784.2 332.8L786.1 334.7L787.9 336.6L789.8 338.5L791.6 340.4L793.4 342.5L795.3 344.5L797.1 346.6L798.9 348.6L800.8 350.7L802.6 352.7L804.5 354.7L806.3 356.8L808.1 358.8L810.0 360.8L811.8 362.9L813.6 365.0L815.5 367.1L817.3 369.3L819.2 371.4L821.0 373.4L822.8 375.5L824.7 377.6M714.0 287.0L716.8 286.4L719.5 285.7L722.3 285.0L725.1 284.3L727.8 283.6L730.6 283.1L733.4 282.6L736.1 282.2L738.9 281.7L741.7 281.4L744.4 281.0L747.2 280.8L750.0 280.7L752.7 280.6L755.5 280.5L758.3 280.4L761.0 280.4L763.8 280.3L766.6 280.3L769.3 280.2L772.1 280.2L774.9 280.2L777.6 280.2L780.4 280.2L783.2 280.2L785.9 280.2L788.7 280.2L791.5 280.2L794.2 280.2L797.0 280.2L799.8 280.2L802.5 280.2L805.3 280.2L808.1 280.2L810.8 280.2L813.6 280.2L816.4 280.2L819.1 280.2L821.9 280.2L824.7 280.2M603.3 276.1L606.1 276.5L608.9 276.9L611.6 277.3L614.4 277.7L617.2 278.1L619.9 278.5L622.7 278.9L625.5 279.2L628.2 279.6L631.0 279.9L633.8 280.2L636.5 280.5L639.3 280.8L642.1 281.1L644.8 281.4L647.6 281.6L650.4 281.9L653.1 282.1L655.9 282.4L658.7 282.6L661.4 282.8L664.2 283.0L667.0 283.2L669.7 283.4L672.5 283.5L675.3 283.7L678.0 283.9L680.8 284.0L683.6 284.1L686.3 284.2L689.1 284.3L691.9 284.4L694.6 284.5L697.4 284.6L700.2 284.6L702.9 284.7L705.7 284.7L708.5 284.8L711.2 284.8L714.0 284.8M603.3 290.7L605.8 290.8L608.2 290.8L610.7 290.9L613.2 291.0L615.6 291.1L618.1 291.2L620.5 291.3L623.0 291.3L625.5 291.4L627.9 291.5L630.4 291.5L632.8 291.6L635.3 291.7L637.8 291.7L640.2 291.8L642.7 291.9L645.1 291.9L647.6 292.0L650.1 292.0L652.5 292.1L655.0 292.1L657.4 292.2L659.9 292.2L662.4 292.2L664.8 292.3L667.3 292.3L669.7 292.4L672.2 292.4L674.7 292.4L677.1 292.5L679.6 292.5L682.0 292.5L684.5 292.5L686.9 292.6L689.4 292.6L691.9 292.6L694.3 292.6L696.8 292.6L699.2 292.7L701.7 292.7L704.2 292.7L706.6 292.7L709.1 292.7L711.5 292.7L714.0 292.7L716.5 292.7L718.9 292.7L721.4 292.7L723.8 292.7L726.3 292.7L728.8 292.7L731.2 292.6L733.7 292.6L736.1 292.6L738.6 292.6L741.1 292.6L743.5 292.5L746.0 292.5L748.4 292.5L750.9 292.5L753.3 292.4L755.8 292.4L758.3 292.4L760.7 292.3L763.2 292.3L765.6 292.2L768.1 292.2L770.6 292.2L773.0 292.1L775.5 292.1L777.9 292.0L780.4 292.0L782.9 291.9L785.3 291.9L787.8 291.8L790.2 291.7L792.7 291.7L795.2 291.6L797.6 291.5L800.1 291.5L802.5 291.4L805.0 291.3L807.5 291.3L809.9 291.2L812.4 291.1L814.8 291.0L817.3 290.9L819.8 290.8L822.2 290.8L824.7 290.7M690.8 291.3L693.1 290.8L695.4 290.3L697.7 289.9L700.1 289.5L702.4 289.2L704.7 289.0L707.0 288.8L709.4 288.6L711.7 288.5L714.0 288.5L716.3 288.5L718.6 288.6L721.0 288.8L723.3 289.0L725.6 289.2L727.9 289.5L730.3 289.9L732.6 290.3L734.9 290.8L737.2 291.3M603.3 363.0L605.5 365.1L607.8 367.1L610.0 369.0L612.2 370.9L614.4 372.6L616.6 374.4L618.8 376.1L621.0 377.9L623.3 379.7L625.5 381.8L627.7 384.0L629.9 386.4L632.1 388.9L634.3 391.5L636.5 394.1L638.7 396.5L641.0 398.8L643.2 401.0L645.4 403.0L647.6 405.1L649.8 407.0L652.0 409.0L654.2 410.8L656.5 412.7L658.7 414.5L660.9 416.2L663.1 417.9L665.3 419.6L667.5 421.2L669.7 422.8L671.9 424.3L674.2 425.8L676.4 427.3L678.6 428.7L680.8 430.0L683.0 431.2L685.2 432.3L687.4 433.3L689.7 434.2L691.9 435.0L694.1 435.8L696.3 436.4L698.5 437.1L700.7 437.7L702.9 438.3L705.1 438.9L707.4 439.4L709.6 440.0L711.8 440.6L714.0 441.2M714.0 441.2L715.9 441.8L717.7 442.4L719.6 443.0L721.4 443.6L723.3 444.2L725.1 444.7L727.0 445.3L728.9 445.8L730.7 446.2L732.6 446.6L734.4 446.9L736.3 447.2L738.2 447.5L740.0 447.8L741.9 448.1L743.7 448.3L745.6 448.5L747.4 448.7L749.3 448.8L751.2 449.0M751.2 449.0L753.0 449.1L754.8 449.2L756.7 449.3L758.5 449.4L760.4 449.5L762.2 449.6L764.0 449.6L765.9 449.7L767.7 449.8L769.5 449.8L771.4 449.9L773.2 449.9L775.1 450.0L776.9 450.0L778.7 450.1L780.6 450.1L782.4 450.1L784.2 450.2L786.1 450.2L787.9 450.2L789.8 450.2L791.6 450.3L793.4 450.3L795.3 450.3L797.1 450.3L798.9 450.4L800.8 450.4L802.6 450.4L804.5 450.4L806.3 450.4L808.1 450.5L810.0 450.5L811.8 450.5L813.6 450.5L815.5 450.5L817.3 450.5L819.2 450.5L821.0 450.5L822.8 450.5L824.7 450.5M603.3 348.4L605.5 350.9L607.8 353.4L610.0 355.9L612.2 358.5L614.4 361.0L616.6 363.6L618.8 366.1L621.0 368.5L623.3 370.9L625.5 373.4L627.7 375.8L629.9 378.3L632.1 380.8L634.3 383.3L636.5 385.7L638.7 388.1L641.0 390.3L643.2 392.6L645.4 394.8L647.6 397.0L649.8 399.1L652.0 401.2L654.2 403.2L656.5 405.0L658.7 406.9L660.9 408.6L663.1 410.3L665.3 412.0L667.5 413.6L669.7 415.1L671.9 416.7L674.2 418.3L676.4 419.8L678.6 421.3L680.8 422.8L683.0 424.2L685.2 425.4L687.4 426.5L689.7 427.5L691.9 428.5L694.1 429.4L696.3 430.2L698.5 430.9L700.7 431.4L702.9 431.8L705.1 432.3L707.4 432.6L709.6 432.9L711.8 433.1L714.0 433.3M714.0 433.3L715.9 433.4L717.7 433.5L719.6 433.6L721.4 433.7L723.3 433.8L725.1 433.9L727.0 433.9L728.9 434.0L730.7 434.1L732.6 434.1L734.4 434.2L736.3 434.2L738.2 434.3L740.0 434.3L741.9 434.4L743.7 434.4L745.6 434.5L747.4 434.5L749.3 434.5L751.2 434.5M751.2 434.5L753.0 434.6L754.8 434.6L756.7 434.6L758.5 434.6L760.4 434.7L762.2 434.7L764.0 434.7L765.9 434.7L767.7 434.8L769.5 434.8L771.4 434.8L773.2 434.8L775.1 434.8L776.9 434.9L778.7 434.9L780.6 434.9L782.4 434.9L784.2 434.9L786.1 434.9L787.9 435.0L789.8 435.0L791.6 435.0L793.4 435.0L795.3 435.0L797.1 435.0L798.9 435.0L800.8 435.0L802.6 435.0L804.5 435.1L806.3 435.1L808.1 435.1L810.0 435.1L811.8 435.1L813.6 435.1L815.5 435.1L817.3 435.1L819.2 435.1L821.0 435.1L822.8 435.1L824.7 435.1M603.3 449.3L606.3 449.1L609.2 448.9L612.2 448.7L615.2 448.5L618.1 448.3L621.1 448.1L624.0 447.9L627.0 447.7L629.9 447.5L632.9 447.2L635.9 447.0L638.8 446.8L641.8 446.6L644.7 446.3L647.7 446.1L650.6 445.9L653.6 445.6L656.6 445.4L659.5 445.2L662.5 445.0L665.4 444.8L668.4 444.6L671.3 444.4L674.3 444.2L677.2 444.1L680.2 443.9L683.2 443.7L686.1 443.6L689.1 443.4L692.0 443.2L695.0 443.0L697.9 442.8L700.9 442.6L703.9 442.3L706.8 442.0L709.8 441.7L712.7 441.4L715.7 441.0L718.6 440.4L721.6 439.7L724.6 438.9L727.5 438.0L730.5 437.0L733.4 436.0L736.4 435.0L739.3 433.8L742.3 432.6L745.3 431.1L748.2 429.4L751.2 427.6M751.2 427.6L753.0 426.4L754.8 425.1L756.7 423.9L758.5 422.6L760.4 421.3L762.2 420.0L764.0 418.6L765.9 417.2L767.7 415.8L769.5 414.3L771.4 412.8L773.2 411.3L775.1 409.8L776.9 408.2L778.7 406.6L780.6 404.9L782.4 403.2L784.2 401.5L786.1 399.8L787.9 397.9L789.8 396.0L791.6 394.0L793.4 391.8L795.3 389.7L797.1 387.5L798.9 385.5L800.8 383.5L802.6 381.7L804.5 380.0L806.3 378.4L808.1 376.9L810.0 375.5L811.8 374.1L813.6 372.6L815.5 371.1L817.3 369.6L819.2 368.0L821.0 366.4L822.8 364.7L824.7 363.0M603.3 435.2L606.3 435.1L609.2 435.1L612.2 435.1L615.2 435.0L618.1 435.0L621.1 434.9L624.0 434.9L627.0 434.8L629.9 434.8L632.9 434.7L635.9 434.7L638.8 434.6L641.8 434.6L644.7 434.5L647.7 434.5L650.6 434.4L653.6 434.4L656.6 434.3L659.5 434.3L662.5 434.2L665.4 434.2L668.4 434.1L671.3 434.1L674.3 434.1L677.2 434.0L680.2 434.0L683.2 434.0L686.1 433.9L689.1 433.9L692.0 433.9L695.0 433.8L697.9 433.8L700.9 433.7L703.9 433.6L706.8 433.5L709.8 433.5L712.7 433.4L715.7 433.2L718.6 432.9L721.6 432.5L724.6 432.0L727.5 431.4L730.5 430.6L733.4 429.6L736.4 428.4L739.3 427.1L742.3 425.6L745.3 424.0L748.2 422.1L751.2 420.1M751.2 420.1L753.0 418.8L754.8 417.5L756.7 416.3L758.5 415.0L760.4 413.7L762.2 412.3L764.0 411.0L765.9 409.6L767.7 408.2L769.5 406.7L771.4 405.2L773.2 403.6L775.1 402.0L776.9 400.3L778.7 398.6L780.6 396.8L782.4 395.0L784.2 393.2L786.1 391.3L787.9 389.4L789.8 387.5L791.6 385.6L793.4 383.5L795.3 381.5L797.1 379.4L798.9 377.4L800.8 375.3L802.6 373.3L804.5 371.3L806.3 369.2L808.1 367.2L810.0 365.2L811.8 363.1L813.6 361.0L815.5 358.9L817.3 356.7L819.2 354.6L821.0 352.6L822.8 350.5L824.7 348.4M714.0 439.0L716.8 439.6L719.5 440.3L722.3 441.0L725.1 441.7L727.8 442.4L730.6 442.9L733.4 443.4L736.1 443.8L738.9 444.3L741.7 444.6L744.4 445.0L747.2 445.2L750.0 445.3L752.7 445.4L755.5 445.5L758.3 445.6L761.0 445.6L763.8 445.7L766.6 445.7L769.3 445.8L772.1 445.8L774.9 445.8L777.6 445.8L780.4 445.8L783.2 445.8L785.9 445.8L788.7 445.8L791.5 445.8L794.2 445.8L797.0 445.8L799.8 445.8L802.5 445.8L805.3 445.8L808.1 445.8L810.8 445.8L813.6 445.8L816.4 445.8L819.1 445.8L821.9 445.8L824.7 445.8M603.3 449.9L606.1 449.5L608.9 449.1L611.6 448.7L614.4 448.3L617.2 447.9L619.9 447.5L622.7 447.1L625.5 446.8L628.2 446.4L631.0 446.1L633.8 445.8L636.5 445.5L639.3 445.2L642.1 444.9L644.8 444.6L647.6 444.4L650.4 444.1L653.1 443.9L655.9 443.6L658.7 443.4L661.4 443.2L664.2 443.0L667.0 442.8L669.7 442.6L672.5 442.5L675.3 442.3L678.0 442.1L680.8 442.0L683.6 441.9L686.3 441.8L689.1 441.7L691.9 441.6L694.6 441.5L697.4 441.4L700.2 441.4L702.9 441.3L705.7 441.3L708.5 441.2L711.2 441.2L714.0 441.2M603.3 435.3L605.8 435.2L608.2 435.2L610.7 435.1L613.2 435.0L615.6 434.9L618.1 434.8L620.5 434.7L623.0 434.7L625.5 434.6L627.9 434.5L630.4 434.5L632.8 434.4L635.3 434.3L637.8 434.3L640.2 434.2L642.7 434.1L645.1 434.1L647.6 434.0L650.1 434.0L652.5 433.9L655.0 433.9L657.4 433.8L659.9 433.8L662.4 433.8L664.8 433.7L667.3 433.7L669.7 433.6L672.2 433.6L674.7 433.6L677.1 433.5L679.6 433.5L682.0 433.5L684.5 433.5L686.9 433.4L689.4 433.4L691.9 433.4L694.3 433.4L696.8 433.4L699.2 433.3L701.7 433.3L704.2 433.3L706.6 433.3L709.1 433.3L711.5 433.3L714.0 433.3L716.5 433.3L718.9 433.3L721.4 433.3L723.8 433.3L726.3 433.3L728.8 433.3L731.2 433.4L733.7 433.4L736.1 433.4L738.6 433.4L741.1 433.4L743.5 433.5L746.0 433.5L748.4 433.5L750.9 433.5L753.3 433.6L755.8 433.6L758.3 433.6L760.7 433.7L763.2 433.7L765.6 433.8L768.1 433.8L770.6 433.8L773.0 433.9L775.5 433.9L777.9 434.0L780.4 434.0L782.9 434.1L785.3 434.1L787.8 434.2L790.2 434.3L792.7 434.3L795.2 434.4L797.6 434.5L800.1 434.5L802.5 434.6L805.0 434.7L807.5 434.7L809.9 434.8L812.4 434.9L814.8 435.0L817.3 435.1L819.8 435.2L822.2 435.2L824.7 435.3M690.8 434.7L693.1 435.2L695.4 435.7L697.7 436.1L700.1 436.5L702.4 436.8L704.7 437.0L707.0 437.2L709.4 437.4L711.7 437.5L714.0 437.5L716.3 437.5L718.6 437.4L721.0 437.2L723.3 437.0L725.6 436.8L727.9 436.5L730.3 436.1L732.6 435.7L734.9 435.2L737.2 434.7" fill="none" stroke="#fff" stroke-opacity="0.05" stroke-width="4.6" stroke-linejoin="round"/><path d="M603.3 363.0L605.5 360.9L607.8 358.9L610.0 357.0L612.2 355.1L614.4 353.4L616.6 351.6L618.8 349.9L621.0 348.1L623.3 346.3L625.5 344.2L627.7 342.0L629.9 339.6L632.1 337.1L634.3 334.5L636.5 331.9L638.7 329.5L641.0 327.2L643.2 325.0L645.4 323.0L647.6 320.9L649.8 319.0L652.0 317.0L654.2 315.2L656.5 313.3L658.7 311.5L660.9 309.8L663.1 308.1L665.3 306.4L667.5 304.8L669.7 303.2L671.9 301.7L674.2 300.2L676.4 298.7L678.6 297.3L680.8 296.0L683.0 294.8L685.2 293.7L687.4 292.7L689.7 291.8L691.9 291.0L694.1 290.2L696.3 289.6L698.5 288.9L700.7 288.3L702.9 287.7L705.1 287.1L707.4 286.6L709.6 286.0L711.8 285.4L714.0 284.8" fill="none" stroke="#fff" stroke-opacity="0.21" stroke-width="2.0"/><path d="M714.0 284.8L715.9 284.2L717.7 283.6L719.6 283.0L721.4 282.4L723.3 281.8L725.1 281.3L727.0 280.7L728.9 280.2L730.7 279.8L732.6 279.4L734.4 279.1L736.3 278.8L738.2 278.5L740.0 278.2L741.9 277.9L743.7 277.7L745.6 277.5L747.4 277.3L749.3 277.2L751.2 277.0" fill="none" stroke="#fff" stroke-opacity="0.165" stroke-width="2.0"/><path d="M751.2 277.0L753.0 276.9L754.8 276.8L756.7 276.7L758.5 276.6L760.4 276.5L762.2 276.4L764.0 276.4L765.9 276.3L767.7 276.2L769.5 276.2L771.4 276.1L773.2 276.1L775.1 276.0L776.9 276.0L778.7 275.9L780.6 275.9L782.4 275.9L784.2 275.8L786.1 275.8L787.9 275.8L789.8 275.8L791.6 275.7L793.4 275.7L795.3 275.7L797.1 275.7L798.9 275.6L800.8 275.6L802.6 275.6L804.5 275.6L806.3 275.6L808.1 275.5L810.0 275.5L811.8 275.5L813.6 275.5L815.5 275.5L817.3 275.5L819.2 275.5L821.0 275.5L822.8 275.5L824.7 275.5" fill="none" stroke="#fff" stroke-opacity="0.13" stroke-width="2.0"/><path d="M603.3 377.6L605.5 375.1L607.8 372.6L610.0 370.1L612.2 367.5L614.4 365.0L616.6 362.4L618.8 359.9L621.0 357.5L623.3 355.1L625.5 352.6L627.7 350.2L629.9 347.7L632.1 345.2L634.3 342.7L636.5 340.3L638.7 337.9L641.0 335.7L643.2 333.4L645.4 331.2L647.6 329.0L649.8 326.9L652.0 324.8L654.2 322.8L656.5 321.0L658.7 319.1L660.9 317.4L663.1 315.7L665.3 314.0L667.5 312.4L669.7 310.9L671.9 309.3L674.2 307.7L676.4 306.2L678.6 304.7L680.8 303.2L683.0 301.8L685.2 300.6L687.4 299.5L689.7 298.5L691.9 297.5L694.1 296.6L696.3 295.8L698.5 295.1L700.7 294.6L702.9 294.2L705.1 293.7L707.4 293.4L709.6 293.1L711.8 292.9L714.0 292.7" fill="none" stroke="#fff" stroke-opacity="0.21" stroke-width="2.0"/><path d="M714.0 292.7L715.9 292.6L717.7 292.5L719.6 292.4L721.4 292.3L723.3 292.2L725.1 292.1L727.0 292.1L728.9 292.0L730.7 291.9L732.6 291.9L734.4 291.8L736.3 291.8L738.2 291.7L740.0 291.7L741.9 291.6L743.7 291.6L745.6 291.5L747.4 291.5L749.3 291.5L751.2 291.5" fill="none" stroke="#fff" stroke-opacity="0.155" stroke-width="2.0"/><path d="M751.2 291.5L753.0 291.4L754.8 291.4L756.7 291.4L758.5 291.4L760.4 291.3L762.2 291.3L764.0 291.3L765.9 291.3L767.7 291.2L769.5 291.2L771.4 291.2L773.2 291.2L775.1 291.2L776.9 291.1L778.7 291.1L780.6 291.1L782.4 291.1L784.2 291.1L786.1 291.1L787.9 291.0L789.8 291.0L791.6 291.0L793.4 291.0L795.3 291.0L797.1 291.0L798.9 291.0L800.8 291.0L802.6 291.0L804.5 290.9L806.3 290.9L808.1 290.9L810.0 290.9L811.8 290.9L813.6 290.9L815.5 290.9L817.3 290.9L819.2 290.9L821.0 290.9L822.8 290.9L824.7 290.9" fill="none" stroke="#fff" stroke-opacity="0.11" stroke-width="2.0"/><path d="M603.3 276.7L606.3 276.9L609.2 277.1L612.2 277.3L615.2 277.5L618.1 277.7L621.1 277.9L624.0 278.1L627.0 278.3L629.9 278.5L632.9 278.8L635.9 279.0L638.8 279.2L641.8 279.4L644.7 279.7L647.7 279.9L650.6 280.1L653.6 280.4L656.6 280.6L659.5 280.8L662.5 281.0L665.4 281.2L668.4 281.4L671.3 281.6L674.3 281.8L677.2 281.9L680.2 282.1L683.2 282.3L686.1 282.4L689.1 282.6L692.0 282.8L695.0 283.0L697.9 283.2L700.9 283.4L703.9 283.7L706.8 284.0L709.8 284.3L712.7 284.6L715.7 285.0L718.6 285.6L721.6 286.3L724.6 287.1L727.5 288.0L730.5 289.0L733.4 290.0L736.4 291.0L739.3 292.2L742.3 293.4L745.3 294.9L748.2 296.6L751.2 298.4" fill="none" stroke="#fff" stroke-opacity="0.17" stroke-width="2.0"/><path d="M751.2 298.4L753.0 299.6L754.8 300.9L756.7 302.1L758.5 303.4L760.4 304.7L762.2 306.0L764.0 307.4L765.9 308.8L767.7 310.2L769.5 311.7L771.4 313.2L773.2 314.7L775.1 316.2L776.9 317.8L778.7 319.4L780.6 321.1L782.4 322.8L784.2 324.5L786.1 326.2L787.9 328.1L789.8 330.0L791.6 332.0L793.4 334.2L795.3 336.3L797.1 338.5L798.9 340.5L800.8 342.5L802.6 344.3L804.5 346.0L806.3 347.6L808.1 349.1L810.0 350.5L811.8 351.9L813.6 353.4L815.5 354.9L817.3 356.4L819.2 358.0L821.0 359.6L822.8 361.3L824.7 363.0" fill="none" stroke="#fff" stroke-opacity="0.105" stroke-width="2.0"/><path d="M603.3 290.8L606.3 290.9L609.2 290.9L612.2 290.9L615.2 291.0L618.1 291.0L621.1 291.1L624.0 291.1L627.0 291.2L629.9 291.2L632.9 291.3L635.9 291.3L638.8 291.4L641.8 291.4L644.7 291.5L647.7 291.5L650.6 291.6L653.6 291.6L656.6 291.7L659.5 291.7L662.5 291.8L665.4 291.8L668.4 291.9L671.3 291.9L674.3 291.9L677.2 292.0L680.2 292.0L683.2 292.0L686.1 292.1L689.1 292.1L692.0 292.1L695.0 292.2L697.9 292.2L700.9 292.3L703.9 292.4L706.8 292.5L709.8 292.5L712.7 292.6L715.7 292.8L718.6 293.1L721.6 293.5L724.6 294.0L727.5 294.6L730.5 295.4L733.4 296.4L736.4 297.6L739.3 298.9L742.3 300.4L745.3 302.0L748.2 303.9L751.2 305.9" fill="none" stroke="#fff" stroke-opacity="0.17" stroke-width="2.0"/><path d="M751.2 305.9L753.0 307.2L754.8 308.5L756.7 309.7L758.5 311.0L760.4 312.3L762.2 313.7L764.0 315.0L765.9 316.4L767.7 317.8L769.5 319.3L771.4 320.8L773.2 322.4L775.1 324.0L776.9 325.7L778.7 327.4L780.6 329.2L782.4 331.0L784.2 332.8L786.1 334.7L787.9 336.6L789.8 338.5L791.6 340.4L793.4 342.5L795.3 344.5L797.1 346.6L798.9 348.6L800.8 350.7L802.6 352.7L804.5 354.7L806.3 356.8L808.1 358.8L810.0 360.8L811.8 362.9L813.6 365.0L815.5 367.1L817.3 369.3L819.2 371.4L821.0 373.4L822.8 375.5L824.7 377.6" fill="none" stroke="#fff" stroke-opacity="0.105" stroke-width="2.0"/><path d="M714.0 287.0L716.8 286.4L719.5 285.7L722.3 285.0L725.1 284.3L727.8 283.6L730.6 283.1L733.4 282.6L736.1 282.2L738.9 281.7L741.7 281.4L744.4 281.0L747.2 280.8L750.0 280.7L752.7 280.6L755.5 280.5L758.3 280.4L761.0 280.4L763.8 280.3L766.6 280.3L769.3 280.2L772.1 280.2L774.9 280.2L777.6 280.2L780.4 280.2L783.2 280.2L785.9 280.2L788.7 280.2L791.5 280.2L794.2 280.2L797.0 280.2L799.8 280.2L802.5 280.2L805.3 280.2L808.1 280.2L810.8 280.2L813.6 280.2L816.4 280.2L819.1 280.2L821.9 280.2L824.7 280.2" fill="none" stroke="#fff" stroke-opacity="0.11" stroke-width="2.0"/><path d="M603.3 276.1L606.1 276.5L608.9 276.9L611.6 277.3L614.4 277.7L617.2 278.1L619.9 278.5L622.7 278.9L625.5 279.2L628.2 279.6L631.0 279.9L633.8 280.2L636.5 280.5L639.3 280.8L642.1 281.1L644.8 281.4L647.6 281.6L650.4 281.9L653.1 282.1L655.9 282.4L658.7 282.6L661.4 282.8L664.2 283.0L667.0 283.2L669.7 283.4L672.5 283.5L675.3 283.7L678.0 283.9L680.8 284.0L683.6 284.1L686.3 284.2L689.1 284.3L691.9 284.4L694.6 284.5L697.4 284.6L700.2 284.6L702.9 284.7L705.7 284.7L708.5 284.8L711.2 284.8L714.0 284.8" fill="none" stroke="#fff" stroke-opacity="0.06" stroke-width="2.0"/><path d="M603.3 290.7L605.8 290.8L608.2 290.8L610.7 290.9L613.2 291.0L615.6 291.1L618.1 291.2L620.5 291.3L623.0 291.3L625.5 291.4L627.9 291.5L630.4 291.5L632.8 291.6L635.3 291.7L637.8 291.7L640.2 291.8L642.7 291.9L645.1 291.9L647.6 292.0L650.1 292.0L652.5 292.1L655.0 292.1L657.4 292.2L659.9 292.2L662.4 292.2L664.8 292.3L667.3 292.3L669.7 292.4L672.2 292.4L674.7 292.4L677.1 292.5L679.6 292.5L682.0 292.5L684.5 292.5L686.9 292.6L689.4 292.6L691.9 292.6L694.3 292.6L696.8 292.6L699.2 292.7L701.7 292.7L704.2 292.7L706.6 292.7L709.1 292.7L711.5 292.7L714.0 292.7L716.5 292.7L718.9 292.7L721.4 292.7L723.8 292.7L726.3 292.7L728.8 292.7L731.2 292.6L733.7 292.6L736.1 292.6L738.6 292.6L741.1 292.6L743.5 292.5L746.0 292.5L748.4 292.5L750.9 292.5L753.3 292.4L755.8 292.4L758.3 292.4L760.7 292.3L763.2 292.3L765.6 292.2L768.1 292.2L770.6 292.2L773.0 292.1L775.5 292.1L777.9 292.0L780.4 292.0L782.9 291.9L785.3 291.9L787.8 291.8L790.2 291.7L792.7 291.7L795.2 291.6L797.6 291.5L800.1 291.5L802.5 291.4L805.0 291.3L807.5 291.3L809.9 291.2L812.4 291.1L814.8 291.0L817.3 290.9L819.8 290.8L822.2 290.8L824.7 290.7" fill="none" stroke="#fff" stroke-opacity="0.06" stroke-width="2.0"/><path d="M690.8 291.3L693.1 290.8L695.4 290.3L697.7 289.9L700.1 289.5L702.4 289.2L704.7 289.0L707.0 288.8L709.4 288.6L711.7 288.5L714.0 288.5L716.3 288.5L718.6 288.6L721.0 288.8L723.3 289.0L725.6 289.2L727.9 289.5L730.3 289.9L732.6 290.3L734.9 290.8L737.2 291.3" fill="none" stroke="#fff" stroke-opacity="0.13" stroke-width="2.0"/><path d="M603.3 363.0L605.5 365.1L607.8 367.1L610.0 369.0L612.2 370.9L614.4 372.6L616.6 374.4L618.8 376.1L621.0 377.9L623.3 379.7L625.5 381.8L627.7 384.0L629.9 386.4L632.1 388.9L634.3 391.5L636.5 394.1L638.7 396.5L641.0 398.8L643.2 401.0L645.4 403.0L647.6 405.1L649.8 407.0L652.0 409.0L654.2 410.8L656.5 412.7L658.7 414.5L660.9 416.2L663.1 417.9L665.3 419.6L667.5 421.2L669.7 422.8L671.9 424.3L674.2 425.8L676.4 427.3L678.6 428.7L680.8 430.0L683.0 431.2L685.2 432.3L687.4 433.3L689.7 434.2L691.9 435.0L694.1 435.8L696.3 436.4L698.5 437.1L700.7 437.7L702.9 438.3L705.1 438.9L707.4 439.4L709.6 440.0L711.8 440.6L714.0 441.2" fill="none" stroke="#fff" stroke-opacity="0.21" stroke-width="2.0"/><path d="M714.0 441.2L715.9 441.8L717.7 442.4L719.6 443.0L721.4 443.6L723.3 444.2L725.1 444.7L727.0 445.3L728.9 445.8L730.7 446.2L732.6 446.6L734.4 446.9L736.3 447.2L738.2 447.5L740.0 447.8L741.9 448.1L743.7 448.3L745.6 448.5L747.4 448.7L749.3 448.8L751.2 449.0" fill="none" stroke="#fff" stroke-opacity="0.165" stroke-width="2.0"/><path d="M751.2 449.0L753.0 449.1L754.8 449.2L756.7 449.3L758.5 449.4L760.4 449.5L762.2 449.6L764.0 449.6L765.9 449.7L767.7 449.8L769.5 449.8L771.4 449.9L773.2 449.9L775.1 450.0L776.9 450.0L778.7 450.1L780.6 450.1L782.4 450.1L784.2 450.2L786.1 450.2L787.9 450.2L789.8 450.2L791.6 450.3L793.4 450.3L795.3 450.3L797.1 450.3L798.9 450.4L800.8 450.4L802.6 450.4L804.5 450.4L806.3 450.4L808.1 450.5L810.0 450.5L811.8 450.5L813.6 450.5L815.5 450.5L817.3 450.5L819.2 450.5L821.0 450.5L822.8 450.5L824.7 450.5" fill="none" stroke="#fff" stroke-opacity="0.13" stroke-width="2.0"/><path d="M603.3 348.4L605.5 350.9L607.8 353.4L610.0 355.9L612.2 358.5L614.4 361.0L616.6 363.6L618.8 366.1L621.0 368.5L623.3 370.9L625.5 373.4L627.7 375.8L629.9 378.3L632.1 380.8L634.3 383.3L636.5 385.7L638.7 388.1L641.0 390.3L643.2 392.6L645.4 394.8L647.6 397.0L649.8 399.1L652.0 401.2L654.2 403.2L656.5 405.0L658.7 406.9L660.9 408.6L663.1 410.3L665.3 412.0L667.5 413.6L669.7 415.1L671.9 416.7L674.2 418.3L676.4 419.8L678.6 421.3L680.8 422.8L683.0 424.2L685.2 425.4L687.4 426.5L689.7 427.5L691.9 428.5L694.1 429.4L696.3 430.2L698.5 430.9L700.7 431.4L702.9 431.8L705.1 432.3L707.4 432.6L709.6 432.9L711.8 433.1L714.0 433.3" fill="none" stroke="#fff" stroke-opacity="0.21" stroke-width="2.0"/><path d="M714.0 433.3L715.9 433.4L717.7 433.5L719.6 433.6L721.4 433.7L723.3 433.8L725.1 433.9L727.0 433.9L728.9 434.0L730.7 434.1L732.6 434.1L734.4 434.2L736.3 434.2L738.2 434.3L740.0 434.3L741.9 434.4L743.7 434.4L745.6 434.5L747.4 434.5L749.3 434.5L751.2 434.5" fill="none" stroke="#fff" stroke-opacity="0.155" stroke-width="2.0"/><path d="M751.2 434.5L753.0 434.6L754.8 434.6L756.7 434.6L758.5 434.6L760.4 434.7L762.2 434.7L764.0 434.7L765.9 434.7L767.7 434.8L769.5 434.8L771.4 434.8L773.2 434.8L775.1 434.8L776.9 434.9L778.7 434.9L780.6 434.9L782.4 434.9L784.2 434.9L786.1 434.9L787.9 435.0L789.8 435.0L791.6 435.0L793.4 435.0L795.3 435.0L797.1 435.0L798.9 435.0L800.8 435.0L802.6 435.0L804.5 435.1L806.3 435.1L808.1 435.1L810.0 435.1L811.8 435.1L813.6 435.1L815.5 435.1L817.3 435.1L819.2 435.1L821.0 435.1L822.8 435.1L824.7 435.1" fill="none" stroke="#fff" stroke-opacity="0.11" stroke-width="2.0"/><path d="M603.3 449.3L606.3 449.1L609.2 448.9L612.2 448.7L615.2 448.5L618.1 448.3L621.1 448.1L624.0 447.9L627.0 447.7L629.9 447.5L632.9 447.2L635.9 447.0L638.8 446.8L641.8 446.6L644.7 446.3L647.7 446.1L650.6 445.9L653.6 445.6L656.6 445.4L659.5 445.2L662.5 445.0L665.4 444.8L668.4 444.6L671.3 444.4L674.3 444.2L677.2 444.1L680.2 443.9L683.2 443.7L686.1 443.6L689.1 443.4L692.0 443.2L695.0 443.0L697.9 442.8L700.9 442.6L703.9 442.3L706.8 442.0L709.8 441.7L712.7 441.4L715.7 441.0L718.6 440.4L721.6 439.7L724.6 438.9L727.5 438.0L730.5 437.0L733.4 436.0L736.4 435.0L739.3 433.8L742.3 432.6L745.3 431.1L748.2 429.4L751.2 427.6" fill="none" stroke="#fff" stroke-opacity="0.17" stroke-width="2.0"/><path d="M751.2 427.6L753.0 426.4L754.8 425.1L756.7 423.9L758.5 422.6L760.4 421.3L762.2 420.0L764.0 418.6L765.9 417.2L767.7 415.8L769.5 414.3L771.4 412.8L773.2 411.3L775.1 409.8L776.9 408.2L778.7 406.6L780.6 404.9L782.4 403.2L784.2 401.5L786.1 399.8L787.9 397.9L789.8 396.0L791.6 394.0L793.4 391.8L795.3 389.7L797.1 387.5L798.9 385.5L800.8 383.5L802.6 381.7L804.5 380.0L806.3 378.4L808.1 376.9L810.0 375.5L811.8 374.1L813.6 372.6L815.5 371.1L817.3 369.6L819.2 368.0L821.0 366.4L822.8 364.7L824.7 363.0" fill="none" stroke="#fff" stroke-opacity="0.105" stroke-width="2.0"/><path d="M603.3 435.2L606.3 435.1L609.2 435.1L612.2 435.1L615.2 435.0L618.1 435.0L621.1 434.9L624.0 434.9L627.0 434.8L629.9 434.8L632.9 434.7L635.9 434.7L638.8 434.6L641.8 434.6L644.7 434.5L647.7 434.5L650.6 434.4L653.6 434.4L656.6 434.3L659.5 434.3L662.5 434.2L665.4 434.2L668.4 434.1L671.3 434.1L674.3 434.1L677.2 434.0L680.2 434.0L683.2 434.0L686.1 433.9L689.1 433.9L692.0 433.9L695.0 433.8L697.9 433.8L700.9 433.7L703.9 433.6L706.8 433.5L709.8 433.5L712.7 433.4L715.7 433.2L718.6 432.9L721.6 432.5L724.6 432.0L727.5 431.4L730.5 430.6L733.4 429.6L736.4 428.4L739.3 427.1L742.3 425.6L745.3 424.0L748.2 422.1L751.2 420.1" fill="none" stroke="#fff" stroke-opacity="0.17" stroke-width="2.0"/><path d="M751.2 420.1L753.0 418.8L754.8 417.5L756.7 416.3L758.5 415.0L760.4 413.7L762.2 412.3L764.0 411.0L765.9 409.6L767.7 408.2L769.5 406.7L771.4 405.2L773.2 403.6L775.1 402.0L776.9 400.3L778.7 398.6L780.6 396.8L782.4 395.0L784.2 393.2L786.1 391.3L787.9 389.4L789.8 387.5L791.6 385.6L793.4 383.5L795.3 381.5L797.1 379.4L798.9 377.4L800.8 375.3L802.6 373.3L804.5 371.3L806.3 369.2L808.1 367.2L810.0 365.2L811.8 363.1L813.6 361.0L815.5 358.9L817.3 356.7L819.2 354.6L821.0 352.6L822.8 350.5L824.7 348.4" fill="none" stroke="#fff" stroke-opacity="0.105" stroke-width="2.0"/><path d="M714.0 439.0L716.8 439.6L719.5 440.3L722.3 441.0L725.1 441.7L727.8 442.4L730.6 442.9L733.4 443.4L736.1 443.8L738.9 444.3L741.7 444.6L744.4 445.0L747.2 445.2L750.0 445.3L752.7 445.4L755.5 445.5L758.3 445.6L761.0 445.6L763.8 445.7L766.6 445.7L769.3 445.8L772.1 445.8L774.9 445.8L777.6 445.8L780.4 445.8L783.2 445.8L785.9 445.8L788.7 445.8L791.5 445.8L794.2 445.8L797.0 445.8L799.8 445.8L802.5 445.8L805.3 445.8L808.1 445.8L810.8 445.8L813.6 445.8L816.4 445.8L819.1 445.8L821.9 445.8L824.7 445.8" fill="none" stroke="#fff" stroke-opacity="0.11" stroke-width="2.0"/><path d="M603.3 449.9L606.1 449.5L608.9 449.1L611.6 448.7L614.4 448.3L617.2 447.9L619.9 447.5L622.7 447.1L625.5 446.8L628.2 446.4L631.0 446.1L633.8 445.8L636.5 445.5L639.3 445.2L642.1 444.9L644.8 444.6L647.6 444.4L650.4 444.1L653.1 443.9L655.9 443.6L658.7 443.4L661.4 443.2L664.2 443.0L667.0 442.8L669.7 442.6L672.5 442.5L675.3 442.3L678.0 442.1L680.8 442.0L683.6 441.9L686.3 441.8L689.1 441.7L691.9 441.6L694.6 441.5L697.4 441.4L700.2 441.4L702.9 441.3L705.7 441.3L708.5 441.2L711.2 441.2L714.0 441.2" fill="none" stroke="#fff" stroke-opacity="0.06" stroke-width="2.0"/><path d="M603.3 435.3L605.8 435.2L608.2 435.2L610.7 435.1L613.2 435.0L615.6 434.9L618.1 434.8L620.5 434.7L623.0 434.7L625.5 434.6L627.9 434.5L630.4 434.5L632.8 434.4L635.3 434.3L637.8 434.3L640.2 434.2L642.7 434.1L645.1 434.1L647.6 434.0L650.1 434.0L652.5 433.9L655.0 433.9L657.4 433.8L659.9 433.8L662.4 433.8L664.8 433.7L667.3 433.7L669.7 433.6L672.2 433.6L674.7 433.6L677.1 433.5L679.6 433.5L682.0 433.5L684.5 433.5L686.9 433.4L689.4 433.4L691.9 433.4L694.3 433.4L696.8 433.4L699.2 433.3L701.7 433.3L704.2 433.3L706.6 433.3L709.1 433.3L711.5 433.3L714.0 433.3L716.5 433.3L718.9 433.3L721.4 433.3L723.8 433.3L726.3 433.3L728.8 433.3L731.2 433.4L733.7 433.4L736.1 433.4L738.6 433.4L741.1 433.4L743.5 433.5L746.0 433.5L748.4 433.5L750.9 433.5L753.3 433.6L755.8 433.6L758.3 433.6L760.7 433.7L763.2 433.7L765.6 433.8L768.1 433.8L770.6 433.8L773.0 433.9L775.5 433.9L777.9 434.0L780.4 434.0L782.9 434.1L785.3 434.1L787.8 434.2L790.2 434.3L792.7 434.3L795.2 434.4L797.6 434.5L800.1 434.5L802.5 434.6L805.0 434.7L807.5 434.7L809.9 434.8L812.4 434.9L814.8 435.0L817.3 435.1L819.8 435.2L822.2 435.2L824.7 435.3" fill="none" stroke="#fff" stroke-opacity="0.06" stroke-width="2.0"/><path d="M690.8 434.7L693.1 435.2L695.4 435.7L697.7 436.1L700.1 436.5L702.4 436.8L704.7 437.0L707.0 437.2L709.4 437.4L711.7 437.5L714.0 437.5L716.3 437.5L718.6 437.4L721.0 437.2L723.3 437.0L725.6 436.8L727.9 436.5L730.3 436.1L732.6 435.7L734.9 435.2L737.2 434.7" fill="none" stroke="#fff" stroke-opacity="0.13" stroke-width="2.0"/></g><path d="M625.9 362.6L627.3 361.0L628.8 359.3L630.3 357.7L631.8 356.0L633.3 354.4L634.8 352.7L636.3 351.0L637.7 349.4L639.2 347.8L640.7 346.2L642.1 344.6L643.5 343.1L645.0 341.6L646.4 340.1L647.9 338.6L649.3 337.1L650.8 335.7L652.2 334.3L653.7 332.9L655.1 331.5L656.5 330.2L657.9 328.9L659.3 327.7L660.7 326.5L662.1 325.3L663.6 324.2L665.0 323.1L666.4 322.0L667.8 320.9L669.3 319.8L670.7 318.7L672.1 317.7L673.5 316.6L675.0 315.6L676.5 314.5L677.9 313.4L679.4 312.3L680.8 311.3L682.2 310.3L683.5 309.3L684.9 308.4L686.2 307.5L687.5 306.7L688.7 306.0L690.1 305.2L691.5 304.5L692.8 303.8L694.2 303.1L695.5 302.5L696.8 301.9L698.1 301.4L699.3 300.9L700.5 300.6L701.8 300.2L703.3 299.9L704.7 299.6L706.1 299.3L707.5 299.0L708.8 298.8L710.2 298.6L711.6 298.4L713.0 298.3L714.3 298.2L713.7 298.2L715.0 298.3L716.4 298.4L717.8 298.6L719.2 298.8L720.5 299.0L721.9 299.3L723.3 299.6L724.7 299.9L726.2 300.2L727.5 300.6L728.7 300.9L729.9 301.4L731.2 301.9L732.5 302.5L733.8 303.1L735.2 303.8L736.5 304.5L737.9 305.2L739.3 306.0L740.5 306.7L741.8 307.5L743.1 308.4L744.5 309.3L745.8 310.3L747.2 311.3L748.6 312.3L750.1 313.4L751.5 314.5L753.0 315.6L754.5 316.6L755.9 317.7L757.3 318.7L758.7 319.8L760.2 320.9L761.6 322.0L763.0 323.1L764.4 324.2L765.9 325.3L767.3 326.5L768.7 327.7L770.1 328.9L771.5 330.2L772.9 331.5L774.3 332.9L775.8 334.3L777.2 335.7L778.7 337.1L780.1 338.6L781.6 340.1L783.0 341.6L784.5 343.1L785.9 344.6L787.3 346.2L788.8 347.8L790.3 349.4L791.7 351.0L793.2 352.7L794.7 354.4L796.2 356.0L797.7 357.7L799.2 359.3L800.7 361.0L802.1 362.6L802.1 363.4L800.7 365.0L799.2 366.7L797.7 368.3L796.2 370.0L794.7 371.6L793.2 373.3L791.7 375.0L790.3 376.6L788.8 378.2L787.3 379.8L785.9 381.4L784.5 382.9L783.0 384.4L781.6 385.9L780.1 387.4L778.7 388.9L777.2 390.3L775.8 391.7L774.3 393.1L772.9 394.5L771.5 395.8L770.1 397.1L768.7 398.3L767.3 399.5L765.9 400.7L764.4 401.8L763.0 402.9L761.6 404.0L760.2 405.1L758.7 406.2L757.3 407.3L755.9 408.3L754.5 409.4L753.0 410.4L751.5 411.5L750.1 412.6L748.6 413.7L747.2 414.7L745.8 415.7L744.5 416.7L743.1 417.6L741.8 418.5L740.5 419.3L739.3 420.0L737.9 420.8L736.5 421.5L735.2 422.2L733.8 422.9L732.5 423.5L731.2 424.1L729.9 424.6L728.7 425.1L727.5 425.4L726.2 425.8L724.7 426.1L723.3 426.4L721.9 426.7L720.5 427.0L719.2 427.2L717.8 427.4L716.4 427.6L715.0 427.7L713.7 427.8L714.3 427.8L713.0 427.7L711.6 427.6L710.2 427.4L708.8 427.2L707.5 427.0L706.1 426.7L704.7 426.4L703.3 426.1L701.8 425.8L700.5 425.4L699.3 425.1L698.1 424.6L696.8 424.1L695.5 423.5L694.2 422.9L692.8 422.2L691.5 421.5L690.1 420.8L688.7 420.0L687.5 419.3L686.2 418.5L684.9 417.6L683.5 416.7L682.2 415.7L680.8 414.7L679.4 413.7L677.9 412.6L676.5 411.5L675.0 410.4L673.5 409.4L672.1 408.3L670.7 407.3L669.3 406.2L667.8 405.1L666.4 404.0L665.0 402.9L663.6 401.8L662.1 400.7L660.7 399.5L659.3 398.3L657.9 397.1L656.5 395.8L655.1 394.5L653.7 393.1L652.2 391.7L650.8 390.3L649.3 388.9L647.9 387.4L646.4 385.9L645.0 384.4L643.5 382.9L642.1 381.4L640.7 379.8L639.2 378.2L637.7 376.6L636.3 375.0L634.8 373.3L633.3 371.6L631.8 370.0L630.3 368.3L628.8 366.7L627.3 365.0L625.9 363.4Z" fill="none" stroke="#c400c4" stroke-width="1.9" stroke-linejoin="round"/><path d="M610.3 363.0H626.9M817.7 363.0H801.1" stroke="#c400c4" stroke-width="2"/><path d="M610.3 257.9H614.0C617.5 258.0 619.5 262.0 620.5 267.0C621.3 272.0 621.8 280.0 622.0 296.0V469.0" fill="none" stroke="#c400c4" stroke-width="2.3"/><path d="M817.7 257.8C814.0 258.0 812.5 259.5 811.5 262.0C810.0 266.0 808.5 272.0 807.5 282.0C806.5 295.0 805.4000000000001 330.0 805.2 360.0V469.0" fill="none" stroke="#c400c4" stroke-width="2.3"/><path d="M713.4 257.0V469.0" stroke="#c400c4" stroke-width="2.8"/></g><path d="M610.3 257.3H817.7M610.3 469.0H817.7" stroke="#6a6a6a" stroke-width="1.4"/><path d="M610.3 257.0v3.5M610.3 469.5v-5.5" stroke="#2d86c9" stroke-width="1.2"/><path d="M817.7 257.0v3.5M816.9000000000001 469.5v-5.5" stroke="#c400c4" stroke-width="1.2"/><path d="M668.4 469.0v-2.2M668.4 257.0v2.2" stroke="#3a3a3a" stroke-width="1"/><path d="M726.4 469.0v-2.2M726.4 257.0v2.2" stroke="#3a3a3a" stroke-width="1"/><path d="M784.5 469.0v-2.2M784.5 257.0v2.2" stroke="#3a3a3a" stroke-width="1"/><text x="605.6" y="262.2" font-size="11.3" text-anchor="end" fill="#2d86c9">0.15</text><text x="605.6" y="297.8" font-size="11.3" text-anchor="end" fill="#2d86c9">0.1</text><text x="605.6" y="333.2" font-size="11.3" text-anchor="end" fill="#2d86c9">0.05</text><text x="605.6" y="368.8" font-size="11.3" text-anchor="end" fill="#2d86c9">0</text><text x="605.6" y="404.2" font-size="11.3" text-anchor="end" fill="#2d86c9">-0.05</text><text x="605.6" y="439.8" font-size="11.3" text-anchor="end" fill="#2d86c9">-0.1</text><text x="605.6" y="475.2" font-size="11.3" text-anchor="end" fill="#2d86c9">-0.15</text><text x="609.7" y="486.2" font-size="10.5" text-anchor="middle" fill="#3c3c3c">0</text><text x="667.8" y="486.2" font-size="10.5" text-anchor="middle" fill="#3c3c3c">5</text><text x="725.8" y="486.2" font-size="10.5" text-anchor="middle" fill="#3c3c3c">10</text><text x="783.9" y="486.2" font-size="10.5" text-anchor="middle" fill="#3c3c3c">15</text><text x="822.3" y="314.4" font-size="11.1" fill="#c400c4">10<tspan dx="0.6" dy="-5.1" font-size="8.4">-5</tspan></text><text x="822.3" y="368.2" font-size="11.1" fill="#c400c4">10<tspan dx="0.6" dy="-5.1" font-size="8.4">-10</tspan></text><text x="822.3" y="422.1" font-size="11.1" fill="#c400c4">10<tspan dx="0.6" dy="-5.1" font-size="8.4">-15</tspan></text><text x="822.3" y="475.9" font-size="11.1" fill="#c400c4">10<tspan dx="0.6" dy="-5.1" font-size="8.4">-20</tspan></text><text x="714" y="502.4" font-size="12.4" text-anchor="middle" fill="#333">[ ps ]</text><text x="714" y="250.3" font-size="12.6" text-anchor="middle" fill="#222">BER</text><text transform="translate(571.3 364.2) rotate(-90)" font-size="13" text-anchor="middle" fill="#2d86c9">[ V ]</text><text transform="translate(866 363.7) rotate(-90)" font-size="12.5" text-anchor="middle" fill="#c400c4">[ Probability ]</text></svg>
<div class="abs" style="left:870px;top:216px;width:1.2px;height:290px;background:#a0a0a0"></div><div class="abs" style="left:871px;top:235px;width:209px;height:1px;background:#cfcfcf"></div><div class="grip" style="left:873px;top:221px"></div><div class="abs" style="left:878.5px;top:216px;width:64.5px;height:20px;background:#fff;border-top:2.8px solid #0f4c8c;border-left:1px solid #d0d0d0;border-right:1px solid #c8c8c8"></div><div class="ui" style="left:886px;top:220px;line-height:14px;letter-spacing:-0.05px">Report</div><div class="ui" style="left:932.5px;top:218.5px;line-height:14px;font-size:11px;color:#888">×</div><div class="abs" style="left:879.7px;top:244.6px;width:190.79999999999995px;height:253.4px;background:#fff;border:1px solid #8a8a8a;overflow:hidden"></div><div class="abs" style="left:879.7px;top:244.6px;width:191.29999999999995px;height:253.4px;overflow:hidden"><div class="abs" style="left:0.00px;top:0.00px;width:35.00px;height:24.20px;background:#f3f3f3;border:1px solid #7f7f7f;font-size:10.3px;line-height:23.2px;color:#1a1a1a;white-space:nowrap;overflow:hidden;padding-left:3.5px;"></div><div class="abs" style="left:34.00px;top:0.00px;width:100.30px;height:24.20px;background:#d9e8f6;border:1px solid #7f7f7f;font-size:10.3px;line-height:23.2px;color:#1a1a1a;white-space:nowrap;overflow:hidden;font-weight:bold;padding-left:3.5px;">Name</div><div class="abs" style="left:133.30px;top:0.00px;width:81.00px;height:24.20px;background:#d9e8f6;border:1px solid #7f7f7f;font-size:10.3px;line-height:23.2px;color:#1a1a1a;white-space:nowrap;overflow:hidden;font-weight:bold;padding-left:3.5px;">Data</div><div class="abs" style="left:0.00px;top:23.20px;width:35.00px;height:19.90px;background:#f3f3f3;border:1px solid #7f7f7f;font-size:10.3px;line-height:18.9px;color:#1a1a1a;white-space:nowrap;overflow:hidden;font-weight:bold;text-align:center;">1</div><div class="abs" style="left:34.00px;top:23.20px;width:100.30px;height:19.90px;background:#fff;border:1px solid #7f7f7f;font-size:10.3px;line-height:18.9px;color:#1a1a1a;white-space:nowrap;overflow:hidden;padding-left:3.5px;">Eye Height (V)</div><div class="abs" style="left:133.30px;top:23.20px;width:81.00px;height:19.90px;background:#fff;border:1px solid #7f7f7f;font-size:10.3px;line-height:18.9px;color:#1a1a1a;white-space:nowrap;overflow:hidden;padding-left:3.5px;">0.17579</div><div class="abs" style="left:0.00px;top:42.10px;width:35.00px;height:19.90px;background:#d6e6f6;border:1px solid #7f7f7f;font-size:10.3px;line-height:18.9px;color:#1a1a1a;white-space:nowrap;overflow:hidden;font-weight:bold;text-align:center;">2</div><div class="abs" style="left:34.00px;top:42.10px;width:100.30px;height:19.90px;background:#d6e6f6;border:1px solid #7f7f7f;font-size:10.3px;line-height:18.9px;color:#1a1a1a;white-space:nowrap;overflow:hidden;padding-left:3.5px;">Eye Width (ps)</div><div class="abs" style="left:133.30px;top:42.10px;width:81.00px;height:19.90px;background:#d6e6f6;border:1px solid #7f7f7f;font-size:10.3px;line-height:18.9px;color:#1a1a1a;white-space:nowrap;overflow:hidden;padding-left:3.5px;">15.7644</div><div class="abs" style="left:0.00px;top:61.00px;width:35.00px;height:19.90px;background:#f3f3f3;border:1px solid #7f7f7f;font-size:10.3px;line-height:18.9px;color:#1a1a1a;white-space:nowrap;overflow:hidden;font-weight:bold;text-align:center;">3</div><div class="abs" style="left:34.00px;top:61.00px;width:100.30px;height:19.90px;background:#fff;border:1px solid #7f7f7f;font-size:10.3px;line-height:18.9px;color:#1a1a1a;white-space:nowrap;overflow:hidden;padding-left:3.5px;">Eye Area (V*ps)</div><div class="abs" style="left:133.30px;top:61.00px;width:81.00px;height:19.90px;background:#fff;border:1px solid #7f7f7f;font-size:10.3px;line-height:18.9px;color:#1a1a1a;white-space:nowrap;overflow:hidden;padding-left:3.5px;">1.7364</div><div class="abs" style="left:0.00px;top:79.90px;width:35.00px;height:19.90px;background:#f3f3f3;border:1px solid #7f7f7f;font-size:10.3px;line-height:18.9px;color:#1a1a1a;white-space:nowrap;overflow:hidden;font-weight:bold;text-align:center;">4</div><div class="abs" style="left:34.00px;top:79.90px;width:100.30px;height:19.90px;background:#f2f2f2;border:1px solid #7f7f7f;font-size:10.3px;line-height:18.9px;color:#1a1a1a;white-space:nowrap;overflow:hidden;padding-left:3.5px;">COM</div><div class="abs" style="left:133.30px;top:79.90px;width:81.00px;height:19.90px;background:#f2f2f2;border:1px solid #7f7f7f;font-size:10.3px;line-height:18.9px;color:#1a1a1a;white-space:nowrap;overflow:hidden;padding-left:3.5px;">15.735</div><div class="abs" style="left:0.00px;top:98.80px;width:35.00px;height:19.90px;background:#f3f3f3;border:1px solid #7f7f7f;font-size:10.3px;line-height:18.9px;color:#1a1a1a;white-space:nowrap;overflow:hidden;font-weight:bold;text-align:center;">5</div><div class="abs" style="left:34.00px;top:98.80px;width:100.30px;height:19.90px;background:#fff;border:1px solid #7f7f7f;font-size:10.3px;line-height:18.9px;color:#1a1a1a;white-space:nowrap;overflow:hidden;padding-left:3.5px;">VEC</div><div class="abs" style="left:133.30px;top:98.80px;width:81.00px;height:19.90px;background:#fff;border:1px solid #7f7f7f;font-size:10.3px;line-height:18.9px;color:#1a1a1a;white-space:nowrap;overflow:hidden;padding-left:3.5px;">1.5496</div><div class="abs" style="left:0.00px;top:117.70px;width:35.00px;height:19.90px;background:#f3f3f3;border:1px solid #7f7f7f;font-size:10.3px;line-height:18.9px;color:#1a1a1a;white-space:nowrap;overflow:hidden;font-weight:bold;text-align:center;">6</div><div class="abs" style="left:34.00px;top:117.70px;width:100.30px;height:19.90px;background:#f2f2f2;border:1px solid #7f7f7f;font-size:10.3px;line-height:18.9px;color:#1a1a1a;white-space:nowrap;overflow:hidden;padding-left:3.5px;"></div><div class="abs" style="left:133.30px;top:117.70px;width:81.00px;height:19.90px;background:#f2f2f2;border:1px solid #7f7f7f;font-size:10.3px;line-height:18.9px;color:#1a1a1a;white-space:nowrap;overflow:hidden;padding-left:3.5px;"></div><div class="abs" style="left:0.00px;top:136.60px;width:35.00px;height:19.90px;background:#f3f3f3;border:1px solid #7f7f7f;font-size:10.3px;line-height:18.9px;color:#1a1a1a;white-space:nowrap;overflow:hidden;font-weight:bold;text-align:center;">7</div><div class="abs" style="left:34.00px;top:136.60px;width:100.30px;height:19.90px;background:#fff;border:1px solid #7f7f7f;font-size:10.3px;line-height:18.9px;color:#1a1a1a;white-space:nowrap;overflow:hidden;padding-left:3.5px;">CTLE:ConfigSelect</div><div class="abs" style="left:133.30px;top:136.60px;width:81.00px;height:19.90px;background:#fff;border:1px solid #7f7f7f;font-size:10.3px;line-height:18.9px;color:#1a1a1a;white-space:nowrap;overflow:hidden;padding-left:3.5px;">3</div><div class="abs" style="left:0.00px;top:155.50px;width:35.00px;height:19.90px;background:#f3f3f3;border:1px solid #7f7f7f;font-size:10.3px;line-height:18.9px;color:#1a1a1a;white-space:nowrap;overflow:hidden;font-weight:bold;text-align:center;">8</div><div class="abs" style="left:34.00px;top:155.50px;width:100.30px;height:19.90px;background:#f2f2f2;border:1px solid #7f7f7f;font-size:10.3px;line-height:18.9px;color:#1a1a1a;white-space:nowrap;overflow:hidden;padding-left:3.5px;"></div><div class="abs" style="left:133.30px;top:155.50px;width:81.00px;height:19.90px;background:#f2f2f2;border:1px solid #7f7f7f;font-size:10.3px;line-height:18.9px;color:#1a1a1a;white-space:nowrap;overflow:hidden;padding-left:3.5px;"></div><div class="abs" style="left:0.00px;top:174.40px;width:35.00px;height:19.90px;background:#f3f3f3;border:1px solid #7f7f7f;font-size:10.3px;line-height:18.9px;color:#1a1a1a;white-space:nowrap;overflow:hidden;font-weight:bold;text-align:center;">9</div><div class="abs" style="left:34.00px;top:174.40px;width:100.30px;height:19.90px;background:#fff;border:1px solid #7f7f7f;font-size:10.3px;line-height:18.9px;color:#1a1a1a;white-space:nowrap;overflow:hidden;padding-left:3.5px;">AGC:Gain (V)</div><div class="abs" style="left:133.30px;top:174.40px;width:81.00px;height:19.90px;background:#fff;border:1px solid #7f7f7f;font-size:10.3px;line-height:18.9px;color:#1a1a1a;white-space:nowrap;overflow:hidden;padding-left:3.5px;">1</div><div class="abs" style="left:0.00px;top:193.30px;width:35.00px;height:19.90px;background:#f3f3f3;border:1px solid #7f7f7f;font-size:10.3px;line-height:18.9px;color:#1a1a1a;white-space:nowrap;overflow:hidden;font-weight:bold;text-align:center;">10</div><div class="abs" style="left:34.00px;top:193.30px;width:100.30px;height:19.90px;background:#f2f2f2;border:1px solid #7f7f7f;font-size:10.3px;line-height:18.9px;color:#1a1a1a;white-space:nowrap;overflow:hidden;padding-left:3.5px;"></div><div class="abs" style="left:133.30px;top:193.30px;width:81.00px;height:19.90px;background:#f2f2f2;border:1px solid #7f7f7f;font-size:10.3px;line-height:18.9px;color:#1a1a1a;white-space:nowrap;overflow:hidden;padding-left:3.5px;"></div><div class="abs" style="left:0.00px;top:212.20px;width:35.00px;height:19.90px;background:#f3f3f3;border:1px solid #7f7f7f;font-size:10.3px;line-height:18.9px;color:#1a1a1a;white-space:nowrap;overflow:hidden;font-weight:bold;text-align:center;">11</div><div class="abs" style="left:34.00px;top:212.20px;width:100.30px;height:19.90px;background:#fff;border:1px solid #7f7f7f;font-size:10.3px;line-height:18.9px;color:#1a1a1a;white-space:nowrap;overflow:hidden;padding-left:3.5px;">DFECDR:TapWei...</div><div class="abs" style="left:133.30px;top:212.20px;width:81.00px;height:19.90px;background:#fff;border:1px solid #7f7f7f;font-size:10.3px;line-height:18.9px;color:#1a1a1a;white-space:nowrap;overflow:hidden;padding-left:3.5px;">[0 0 0 0]</div><div class="abs" style="left:33.50px;top:41.60px;width:101.30px;height:20.90px;border:2px solid #2b7fd3"></div><div class="abs" style="left:133.80px;top:41.60px;width:90px;height:20.90px;border:2px solid #2b7fd3;border-left:none"></div><div class="abs" style="left:1px;top:236.9px;width:189.79999999999995px;height:16px;background:#f1f1f1"></div><div class="abs" style="left:0px;top:237.4px;width:34.0px;height:1px;background:#9a9a9a"></div><div class="abs" style="left:49.299999999999955px;top:239.4px;width:121px;height:12px;background:#c1c1c1"></div><div class="abs" style="left:40.299999999999955px;top:241.9px;border-top:3.5px solid transparent;border-bottom:3.5px solid transparent;border-right:4px solid #a3a3a3"></div><div class="abs" style="left:181.29999999999995px;top:241.9px;border-top:3.5px solid transparent;border-bottom:3.5px solid transparent;border-left:4px solid #505050"></div></div><div class="abs" style="left:1070.0px;top:244.6px;width:1px;height:253.4px;background:#8a8a8a"></div>
</body></html>
